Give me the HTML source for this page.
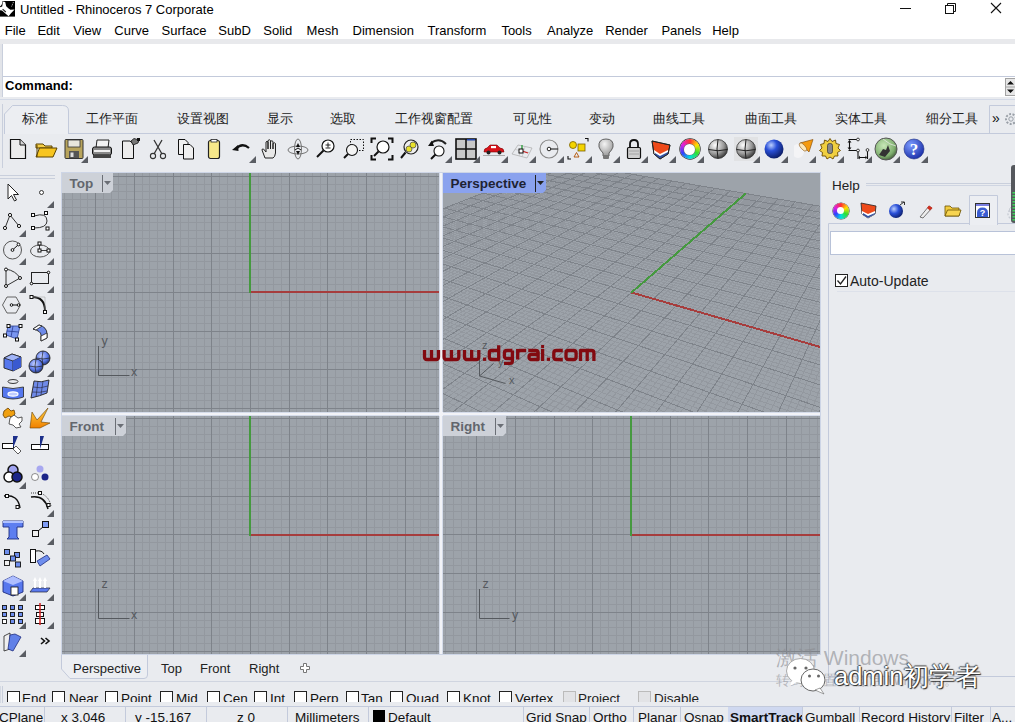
<!DOCTYPE html>
<html><head><meta charset="utf-8"><style>
html,body{margin:0;padding:0;width:1015px;height:722px;overflow:hidden;background:#e9ebef;font-family:"Liberation Sans", sans-serif;}
svg{display:block}
</style></head><body>
<div style="position:absolute;left:0px;top:0px;width:1015px;height:39px;background:#fff"></div><svg style="position:absolute;left:0;top:0" width="16" height="18" viewBox="0 0 16 18"><rect x="0" y="1" width="15" height="15.6" fill="#000"/><path d="M0 0.5 H2.6 Q2.4 5 0 6.6Z" fill="#fff"/><path d="M3 1.6 L5.2 2 L6.2 6.2 L8.6 8.6 L10.4 9.8 L14.6 9.6 L11 13.2 L8.6 16.2 L5.4 13.6 L2 10.6 L0 10.2 L0 7.2 L2.2 6.6Z" fill="#fff"/><path d="M2.6 9.2 L5.8 12" stroke="#222" stroke-width="1.1"/><path d="M13.4 2.2 L11.4 7" stroke="#ddd" stroke-width="0.9" stroke-dasharray="1 0.8"/></svg><div style="position:absolute;left:20px;top:2.00px;font-size:13px;line-height:15px;color:#000;font-weight:normal;white-space:nowrap;">Untitled - Rhinoceros 7 Corporate</div><svg style="position:absolute;left:895px;top:0" width="120" height="19" viewBox="0 0 120 19"><line x1="5" y1="8.5" x2="16" y2="8.5" stroke="#111" stroke-width="1"/><rect x="50.5" y="5.5" width="8" height="8" fill="none" stroke="#111"/><path d="M52.5 5.5 V3.5 H60.5 V11.5 H58.5" fill="none" stroke="#111"/><path d="M96 3 L106 13 M106 3 L96 13" stroke="#111" stroke-width="1.1"/></svg><div style="position:absolute;left:4.7px;top:23.00px;font-size:13px;line-height:15px;color:#000;font-weight:normal;white-space:nowrap;">File</div><div style="position:absolute;left:37.4px;top:23.00px;font-size:13px;line-height:15px;color:#000;font-weight:normal;white-space:nowrap;">Edit</div><div style="position:absolute;left:73.3px;top:23.00px;font-size:13px;line-height:15px;color:#000;font-weight:normal;white-space:nowrap;">View</div><div style="position:absolute;left:114.3px;top:23.00px;font-size:13px;line-height:15px;color:#000;font-weight:normal;white-space:nowrap;">Curve</div><div style="position:absolute;left:161.6px;top:23.00px;font-size:13px;line-height:15px;color:#000;font-weight:normal;white-space:nowrap;">Surface</div><div style="position:absolute;left:218.3px;top:23.00px;font-size:13px;line-height:15px;color:#000;font-weight:normal;white-space:nowrap;">SubD</div><div style="position:absolute;left:263.3px;top:23.00px;font-size:13px;line-height:15px;color:#000;font-weight:normal;white-space:nowrap;">Solid</div><div style="position:absolute;left:306.6px;top:23.00px;font-size:13px;line-height:15px;color:#000;font-weight:normal;white-space:nowrap;">Mesh</div><div style="position:absolute;left:352.6px;top:23.00px;font-size:13px;line-height:15px;color:#000;font-weight:normal;white-space:nowrap;">Dimension</div><div style="position:absolute;left:427.5px;top:23.00px;font-size:13px;line-height:15px;color:#000;font-weight:normal;white-space:nowrap;">Transform</div><div style="position:absolute;left:501.4px;top:23.00px;font-size:13px;line-height:15px;color:#000;font-weight:normal;white-space:nowrap;">Tools</div><div style="position:absolute;left:547px;top:23.00px;font-size:13px;line-height:15px;color:#000;font-weight:normal;white-space:nowrap;">Analyze</div><div style="position:absolute;left:605.2px;top:23.00px;font-size:13px;line-height:15px;color:#000;font-weight:normal;white-space:nowrap;">Render</div><div style="position:absolute;left:661.4px;top:23.00px;font-size:13px;line-height:15px;color:#000;font-weight:normal;white-space:nowrap;">Panels</div><div style="position:absolute;left:712.2px;top:23.00px;font-size:13px;line-height:15px;color:#000;font-weight:normal;white-space:nowrap;">Help</div><div style="position:absolute;left:0px;top:39px;width:1015px;height:5px;background:#e8e9ec"></div><div style="position:absolute;left:0px;top:44px;width:1015px;height:54px;background:#fff"></div><div style="position:absolute;left:0px;top:44px;width:2px;height:54px;background:#e2e4e9"></div><div style="position:absolute;left:2px;top:44px;width:1px;height:54px;background:#c9cfdc"></div><div style="position:absolute;left:3px;top:76px;width:1012px;height:1px;background:#c3cadb"></div><div style="position:absolute;left:5px;top:78.00px;font-size:13px;line-height:15px;color:#000;font-weight:bold;white-space:nowrap;">Command:</div><svg style="position:absolute;left:1005px;top:78px" width="10" height="18" viewBox="0 0 10 18"><rect x="0.5" y="0.5" width="11" height="17" fill="#e6e6e6" stroke="#a3a3a3"/><line x1="0" y1="9" x2="11" y2="9" stroke="#a3a3a3"/><path d="M2 6.5 L5.5 3 L9 6.5Z M2 11.5 L5.5 15 L9 11.5Z" fill="#111"/></svg><div style="position:absolute;left:0px;top:97px;width:1015px;height:76px;background:#e9ebef"></div><div style="position:absolute;left:0px;top:99px;width:1015px;height:1px;background:#d3d9e6"></div><div style="position:absolute;left:2px;top:104px;width:1px;height:64px;background:#c9cfdc"></div><div style="position:absolute;left:68px;top:133px;width:947px;height:1px;background:#c3cadb"></div><svg style="position:absolute;left:3px;top:104px" width="67" height="31" viewBox="0 0 67 31"><path d="M1.5 30 V10 L9.5 1.5 H59.5 Q65.5 1.5 65.5 7 V30" fill="#eceef2" stroke="#c3cadb" stroke-width="1"/></svg><div style="position:absolute;left:22px;top:111.30px;font-size:13px;line-height:15px;color:#222;font-weight:normal;white-space:nowrap;">标准</div><div style="position:absolute;left:86px;top:111.30px;font-size:13px;line-height:15px;color:#222;font-weight:normal;white-space:nowrap;">工作平面</div><div style="position:absolute;left:177px;top:111.30px;font-size:13px;line-height:15px;color:#222;font-weight:normal;white-space:nowrap;">设置视图</div><div style="position:absolute;left:267px;top:111.30px;font-size:13px;line-height:15px;color:#222;font-weight:normal;white-space:nowrap;">显示</div><div style="position:absolute;left:330px;top:111.30px;font-size:13px;line-height:15px;color:#222;font-weight:normal;white-space:nowrap;">选取</div><div style="position:absolute;left:395px;top:111.30px;font-size:13px;line-height:15px;color:#222;font-weight:normal;white-space:nowrap;">工作视窗配置</div><div style="position:absolute;left:513px;top:111.30px;font-size:13px;line-height:15px;color:#222;font-weight:normal;white-space:nowrap;">可见性</div><div style="position:absolute;left:589px;top:111.30px;font-size:13px;line-height:15px;color:#222;font-weight:normal;white-space:nowrap;">变动</div><div style="position:absolute;left:653px;top:111.30px;font-size:13px;line-height:15px;color:#222;font-weight:normal;white-space:nowrap;">曲线工具</div><div style="position:absolute;left:744.6px;top:111.30px;font-size:13px;line-height:15px;color:#222;font-weight:normal;white-space:nowrap;">曲面工具</div><div style="position:absolute;left:835px;top:111.30px;font-size:13px;line-height:15px;color:#222;font-weight:normal;white-space:nowrap;">实体工具</div><div style="position:absolute;left:926px;top:111.30px;font-size:13px;line-height:15px;color:#222;font-weight:normal;white-space:nowrap;">细分工具</div><svg style="position:absolute;left:988px;top:104px" width="27" height="30" viewBox="0 0 27 30"><path d="M1.5 30 V1.5 H27" fill="none" stroke="#c3cadb"/></svg><div style="position:absolute;left:992px;top:110.65px;font-size:14px;line-height:15px;color:#111;font-weight:normal;white-space:nowrap;">»</div><svg style="position:absolute;left:1003px;top:111px" width="14" height="16" viewBox="0 0 14 16"><circle cx="8" cy="8" r="5" fill="none" stroke="#9aa0a8" stroke-width="2" stroke-dasharray="2 1.5"/><circle cx="8" cy="8" r="2.2" fill="none" stroke="#9aa0a8"/></svg><svg style="position:absolute;left:5.5px;top:137px;" width="24" height="24" viewBox="0 0 24 24"><path d="M4.5 2.5 H14 L19.5 8 V21.5 H4.5 Z" fill="#ececec" stroke="#111" stroke-width="1.2"/><path d="M14 2.5 V8 H19.5" fill="#d5d5d5" stroke="#111" stroke-width="1"/></svg><svg style="position:absolute;left:33.5px;top:137px;" width="24" height="24" viewBox="0 0 24 24"><path d="M2 7 H9 L11 9 H18 V11 H2 Z" fill="#f6cf47" stroke="#5a4300" stroke-width="1"/><path d="M2 20 L5.5 11 H23 L19 20 Z" fill="#f7c520" stroke="#5a4300" stroke-width="1"/><path d="M3 20 V8" stroke="#5a4300"/></svg><svg style="position:absolute;left:61.5px;top:137px;" width="24" height="24" viewBox="0 0 24 24"><rect x="3" y="2.5" width="18" height="19" rx="1" fill="#b8a45c" stroke="#333" stroke-width="1"/><rect x="6" y="3" width="12" height="7" fill="#e8e6dc" stroke="#333" stroke-width="0.8"/><rect x="7" y="14" width="10" height="7" fill="#555"/><rect x="8.5" y="15.5" width="3" height="4.5" fill="#ddd"/></svg><svg style="position:absolute;left:80.5px;top:155.5px;" width="7" height="7" viewBox="0 0 7 7"><path d="M7 0 V7 H0 Z" fill="#5a5d63"/></svg><svg style="position:absolute;left:89.5px;top:137px;" width="24" height="24" viewBox="0 0 24 24"><path d="M7 3 H19 L18 11 H6 Z" fill="#f2f2f2" stroke="#222"/><rect x="2.5" y="10" width="19" height="8" rx="2" fill="#888" stroke="#111"/><rect x="4" y="13" width="16" height="2" fill="#eee"/><rect x="3" y="18" width="18" height="3" fill="#444"/></svg><svg style="position:absolute;left:117.5px;top:137px;" width="24" height="24" viewBox="0 0 24 24"><path d="M4.5 4 H12 L15.5 7 V21.5 H4.5 Z" fill="#ececec" stroke="#111"/><path d="M13 4 L16 1.5 L21 3 L20 6 L15 8Z" fill="#777" stroke="#111" stroke-width="0.8"/><rect x="19" y="1" width="3" height="3" fill="#111"/></svg><svg style="position:absolute;left:145.5px;top:137px;" width="24" height="24" viewBox="0 0 24 24"><path d="M8 3 L16 17 M16 3 L8 17" stroke="#333" stroke-width="1.3"/><circle cx="7" cy="19" r="2.6" fill="none" stroke="#333" stroke-width="1.1"/><circle cx="17" cy="19" r="2.6" fill="none" stroke="#333" stroke-width="1.1"/></svg><svg style="position:absolute;left:173.5px;top:137px;" width="24" height="24" viewBox="0 0 24 24"><path d="M4.5 2.5 H11 L14 5.5 V17.5 H4.5 Z" fill="#f0f0f0" stroke="#111"/><path d="M9.5 7.5 H16 L19.5 11 V22 H9.5 Z" fill="#f0f0f0" stroke="#111"/></svg><svg style="position:absolute;left:201.5px;top:137px;" width="24" height="24" viewBox="0 0 24 24"><rect x="6.5" y="3.5" width="11" height="18" rx="2" fill="#f7e88a" stroke="#222" stroke-width="1.2"/><rect x="9" y="2.5" width="6" height="2.5" fill="#fff" stroke="#222" stroke-width="0.8"/></svg><svg style="position:absolute;left:229.5px;top:137px;" width="24" height="24" viewBox="0 0 24 24"><path d="M6 12 Q12 5 19 11" fill="none" stroke="#111" stroke-width="2.2"/><path d="M2 13 L8 8 L8.5 14Z" fill="#111"/></svg><svg style="position:absolute;left:248.5px;top:155.5px;" width="7" height="7" viewBox="0 0 7 7"><path d="M7 0 V7 H0 Z" fill="#5a5d63"/></svg><svg style="position:absolute;left:257.5px;top:137px;" width="24" height="24" viewBox="0 0 24 24"><path d="M7 21 L4 13 Q4 11.5 5.5 12 L8 15 V5 Q9 3.5 10 5 V12 V3.5 Q11.5 2 12.5 3.5 V12 V4.5 Q14 3 15 4.5 V12 V6.5 Q16.5 5 17.5 6.5 V16 Q17 20 15 21 Z" fill="#e8e8e8" stroke="#222" stroke-width="1"/></svg><svg style="position:absolute;left:285.5px;top:137px;" width="24" height="24" viewBox="0 0 24 24"><ellipse cx="12" cy="13" rx="10" ry="4" fill="none" stroke="#666" stroke-width="0.9"/><ellipse cx="12" cy="12" rx="3.5" ry="10" fill="none" stroke="#666" stroke-width="0.9"/><path d="M12 6 L14 10 H10Z M12 18 L10 14 H14Z" fill="#111"/><path d="M9 13 L12 11 L15 13" stroke="#111" fill="none"/></svg><svg style="position:absolute;left:313.5px;top:137px;" width="24" height="24" viewBox="0 0 24 24"><circle cx="14" cy="9" r="6" fill="#fff" stroke="#111" stroke-width="1.2"/><path d="M9.5 13.5 L3 20" stroke="#111" stroke-width="2"/><path d="M11.5 8 H16.5 M14 5.5 V10.5 M11.5 11 H16.5" stroke="#111" stroke-width="0.9"/></svg><svg style="position:absolute;left:341.5px;top:137px;" width="24" height="24" viewBox="0 0 24 24"><rect x="8.5" y="2.5" width="13" height="11" fill="none" stroke="#111" stroke-dasharray="1.5 1.5"/><circle cx="10" cy="13" r="5.5" fill="#f4f4f4" stroke="#111" stroke-width="1.1"/><path d="M6 17 L2 21" stroke="#111" stroke-width="2"/></svg><svg style="position:absolute;left:369.5px;top:137px;" width="24" height="24" viewBox="0 0 24 24"><path d="M1.5 6 V1.5 H6 M18 1.5 H22.5 V6 M22.5 18 V22.5 H18 M6 22.5 H1.5 V18" fill="none" stroke="#111" stroke-width="2"/><circle cx="13" cy="10" r="6" fill="#fff" stroke="#111" stroke-width="1.2"/><path d="M8.5 14.5 L4 19" stroke="#111" stroke-width="2"/></svg><svg style="position:absolute;left:397.5px;top:137px;" width="24" height="24" viewBox="0 0 24 24"><circle cx="13" cy="10" r="7" fill="#eee" stroke="#222" stroke-width="1.2"/><circle cx="11" cy="12" r="3" fill="#e9e22a" stroke="#444" stroke-width="0.7"/><circle cx="15" cy="8" r="3" fill="#e9e22a" stroke="#444" stroke-width="0.7"/><path d="M7.5 15.5 L3 21" stroke="#111" stroke-width="2"/></svg><svg style="position:absolute;left:425.5px;top:137px;" width="24" height="24" viewBox="0 0 24 24"><path d="M5 6 Q13 0 20 7" fill="none" stroke="#222" stroke-width="2"/><path d="M2 9 L6 3.5 L8 9Z" fill="#111"/><circle cx="13" cy="14" r="5" fill="#fff" stroke="#111" stroke-width="1.1"/><path d="M9.5 17.5 L5 22" stroke="#111" stroke-width="2"/></svg><svg style="position:absolute;left:444.5px;top:155.5px;" width="7" height="7" viewBox="0 0 7 7"><path d="M7 0 V7 H0 Z" fill="#5a5d63"/></svg><svg style="position:absolute;left:453.5px;top:137px;" width="24" height="24" viewBox="0 0 24 24"><rect x="2" y="2" width="20" height="20" fill="#c8c8c8" stroke="#111" stroke-width="1.6"/><path d="M12 2 V22 M2 12 H22" stroke="#111" stroke-width="1.6"/><rect x="13" y="2" width="8" height="1.5" fill="#2244aa"/></svg><svg style="position:absolute;left:472.5px;top:155.5px;" width="7" height="7" viewBox="0 0 7 7"><path d="M7 0 V7 H0 Z" fill="#5a5d63"/></svg><svg style="position:absolute;left:481.5px;top:137px;" width="24" height="24" viewBox="0 0 24 24"><path d="M2 15 Q2 11 5 11 L8 8 H15 L18 11 Q22 11 22 15 Z" fill="#d8121a" stroke="#7a0000" stroke-width="0.6"/><rect x="9" y="9" width="5" height="2.2" fill="#fff"/><circle cx="6.5" cy="15.5" r="2" fill="#222"/><circle cx="17.5" cy="15.5" r="2" fill="#222"/><line x1="1" y1="18.5" x2="23" y2="18.5" stroke="#999" stroke-width="0.8"/></svg><svg style="position:absolute;left:500.5px;top:155.5px;" width="7" height="7" viewBox="0 0 7 7"><path d="M7 0 V7 H0 Z" fill="#5a5d63"/></svg><svg style="position:absolute;left:509.5px;top:137px;" width="24" height="24" viewBox="0 0 24 24"><path d="M2 17 L8 8 L22 11 L17 21 Z" fill="none" stroke="#aaa" stroke-width="0.7"/><path d="M5 12.5 L19 15.5 M12 9.5 L9 19 M15 10 L12 20" stroke="#bbb" stroke-width="0.6"/><path d="M12 14 L12 8" stroke="#1a9a2a" stroke-width="1.2"/><path d="M12 14 L18 16" stroke="#cc2222" stroke-width="1.2"/><rect x="9" y="12" width="4" height="4" fill="#fff" stroke="#111"/></svg><svg style="position:absolute;left:528.5px;top:155.5px;" width="7" height="7" viewBox="0 0 7 7"><path d="M7 0 V7 H0 Z" fill="#5a5d63"/></svg><svg style="position:absolute;left:537.5px;top:137px;" width="24" height="24" viewBox="0 0 24 24"><circle cx="11" cy="12" r="9" fill="none" stroke="#888" stroke-width="1.1"/><circle cx="11" cy="12" r="1.8" fill="#fff" stroke="#111" stroke-width="0.9"/><path d="M12.5 12 H20" stroke="#111" stroke-width="1"/></svg><svg style="position:absolute;left:556.5px;top:155.5px;" width="7" height="7" viewBox="0 0 7 7"><path d="M7 0 V7 H0 Z" fill="#5a5d63"/></svg><svg style="position:absolute;left:565.5px;top:137px;" width="24" height="24" viewBox="0 0 24 24"><circle cx="7" cy="8" r="3.5" fill="#f4d400" stroke="#7a6000" stroke-width="0.8"/><rect x="12" y="7" width="7" height="7" fill="#f4d400" stroke="#7a6000" stroke-width="0.8"/><path d="M8 20 L10.5 15.5 L13 20Z" fill="none" stroke="#b05000" stroke-width="0.9"/><path d="M2 19 V22 H5 M19 1.5 H22 V4.5" fill="none" stroke="#111" stroke-width="1.1"/></svg><svg style="position:absolute;left:584.5px;top:155.5px;" width="7" height="7" viewBox="0 0 7 7"><path d="M7 0 V7 H0 Z" fill="#5a5d63"/></svg><svg style="position:absolute;left:593.5px;top:137px;" width="24" height="24" viewBox="0 0 24 24"><defs><radialGradient id="bu" cx="0.4" cy="0.3" r="0.7"><stop offset="0" stop-color="#f4f4f4"/><stop offset="1" stop-color="#9a9a9a"/></radialGradient></defs><path d="M12 2 Q20 2 19 10 Q18 13 15 16 V19 H9 V16 Q6 13 5 10 Q4 2 12 2Z" fill="url(#bu)" stroke="#555" stroke-width="0.9"/><rect x="9" y="18" width="6" height="4" rx="1" fill="#777"/></svg><svg style="position:absolute;left:612.5px;top:155.5px;" width="7" height="7" viewBox="0 0 7 7"><path d="M7 0 V7 H0 Z" fill="#5a5d63"/></svg><svg style="position:absolute;left:621.5px;top:137px;" width="24" height="24" viewBox="0 0 24 24"><path d="M8 11 V7 Q8 3 12 3 Q16 3 16 7 V11" fill="none" stroke="#111" stroke-width="1.8"/><rect x="5.5" y="10.5" width="13" height="11" rx="1.2" fill="#cfcfcf" stroke="#111" stroke-width="1.2"/><path d="M7 14 H17 M7 17 H17" stroke="#999" stroke-width="0.8"/></svg><svg style="position:absolute;left:640.5px;top:155.5px;" width="7" height="7" viewBox="0 0 7 7"><path d="M7 0 V7 H0 Z" fill="#5a5d63"/></svg><svg style="position:absolute;left:649.5px;top:137px;" width="24" height="24" viewBox="0 0 24 24"><path d="M2 4 L20 8 L18 17 L10 22 L4 17Z" fill="#ee4a1a" stroke="#222" stroke-width="0.8"/><path d="M4 13 L10 17 L18 13 L18 17 L10 22 L4 17Z" fill="#fff"/><path d="M5 16 L10 19 L18 15 L18 17 L10 22 L5 18Z" fill="#3050a0"/><path d="M2 4 L20 8 L18 17 L10 22 L4 17Z" fill="none" stroke="#222" stroke-width="1"/></svg><svg style="position:absolute;left:668.5px;top:155.5px;" width="7" height="7" viewBox="0 0 7 7"><path d="M7 0 V7 H0 Z" fill="#5a5d63"/></svg><svg style="position:absolute;left:677.5px;top:137px;" width="24" height="24" viewBox="0 0 24 24"></svg><svg style="position:absolute;left:696.5px;top:155.5px;" width="7" height="7" viewBox="0 0 7 7"><path d="M7 0 V7 H0 Z" fill="#5a5d63"/></svg><svg style="position:absolute;left:705.5px;top:137px;" width="24" height="24" viewBox="0 0 24 24"><defs><radialGradient id="gs" cx="0.35" cy="0.3" r="0.75"><stop offset="0" stop-color="#fff"/><stop offset="0.6" stop-color="#999"/><stop offset="1" stop-color="#333"/></radialGradient></defs><circle cx="12" cy="12" r="9.5" fill="url(#gs)" stroke="#333" stroke-width="0.8"/><path d="M2.5 12.5 Q12 15 21.5 12.5 M12 2.5 Q10 12 12 21.5" fill="none" stroke="#222" stroke-width="1"/></svg><svg style="position:absolute;left:733.5px;top:137px;" width="24" height="24" viewBox="0 0 24 24"><rect x="0" y="0" width="24" height="24" fill="#dcdcdc" opacity="0.6"/><circle cx="12" cy="12" r="9.5" fill="url(#gs)" stroke="#333" stroke-width="0.8"/><path d="M2.5 12.5 Q12 15 21.5 12.5 M12 2.5 Q10 12 12 21.5" fill="none" stroke="#222" stroke-width="1"/></svg><svg style="position:absolute;left:752.5px;top:155.5px;" width="7" height="7" viewBox="0 0 7 7"><path d="M7 0 V7 H0 Z" fill="#5a5d63"/></svg><svg style="position:absolute;left:761.5px;top:137px;" width="24" height="24" viewBox="0 0 24 24"><defs><radialGradient id="bs" cx="0.35" cy="0.3" r="0.75"><stop offset="0" stop-color="#bcd0ff"/><stop offset="0.4" stop-color="#2a50d8"/><stop offset="1" stop-color="#0a1a60"/></radialGradient></defs><circle cx="12" cy="12" r="9.5" fill="url(#bs)"/></svg><svg style="position:absolute;left:780.5px;top:155.5px;" width="7" height="7" viewBox="0 0 7 7"><path d="M7 0 V7 H0 Z" fill="#5a5d63"/></svg><svg style="position:absolute;left:793.5px;top:137px;" width="24" height="24" viewBox="0 0 24 24"><ellipse cx="4" cy="14" rx="6" ry="7" fill="#f4f4f6"/><path d="M6 6 L19 2.5 L15 15 Z" fill="#f59a10" stroke="#7a4200" stroke-width="0.6"/><ellipse cx="9" cy="10" rx="2.2" ry="5" transform="rotate(-40 9 10)" fill="#fde7b8" stroke="#7a4200" stroke-width="0.5"/></svg><svg style="position:absolute;left:808.5px;top:155.5px;" width="7" height="7" viewBox="0 0 7 7"><path d="M7 0 V7 H0 Z" fill="#5a5d63"/></svg><svg style="position:absolute;left:817.5px;top:137px;" width="24" height="24" viewBox="0 0 24 24"><path d="M12 1.5 L14 4.5 L17.5 3 L18 6.5 L21.5 7.5 L20 11 L22.5 13.5 L19.5 15.5 L20 19 L16.5 19 L15 22 L12 20 L9 22 L7.5 19 L4 19 L4.5 15.5 L1.5 13.5 L4 11 L2.5 7.5 L6 6.5 L6.5 3 L10 4.5 Z" fill="#f0cf40" stroke="#6a4a00" stroke-width="0.9"/><rect x="9.5" y="6.5" width="5" height="10" rx="2" fill="#888" stroke="#333" stroke-width="0.7"/></svg><svg style="position:absolute;left:836.5px;top:155.5px;" width="7" height="7" viewBox="0 0 7 7"><path d="M7 0 V7 H0 Z" fill="#5a5d63"/></svg><svg style="position:absolute;left:845.5px;top:137px;" width="24" height="24" viewBox="0 0 24 24"><path d="M2.5 2.5 H11 M2.5 13.5 H11 M12 14 V22 M21.5 14 V22 M3.5 4.5 V11.5 M13.5 20.5 H20" fill="none" stroke="#111" stroke-width="1.1"/><path d="M1.5 5.5 L3.5 3 L5.5 5.5Z M1.5 10.5 L3.5 13 L5.5 10.5Z M14 18.5 L12.5 20.5 L14 22.5Z M19.5 18.5 L21 20.5 L19.5 22.5Z" fill="#111"/><circle cx="12" cy="2.5" r="1.4" fill="#fff" stroke="#111" stroke-width="0.8"/><circle cx="12" cy="13.5" r="1.4" fill="#fff" stroke="#111" stroke-width="0.8"/><circle cx="21.5" cy="13" r="1.4" fill="#fff" stroke="#111" stroke-width="0.8"/></svg><svg style="position:absolute;left:864.5px;top:155.5px;" width="7" height="7" viewBox="0 0 7 7"><path d="M7 0 V7 H0 Z" fill="#5a5d63"/></svg><svg style="position:absolute;left:873.5px;top:137px;" width="24" height="24" viewBox="0 0 24 24"><defs><radialGradient id="grs" cx="0.4" cy="0.35" r="0.7"><stop offset="0" stop-color="#c8e8b8"/><stop offset="0.7" stop-color="#80b070"/><stop offset="1" stop-color="#405a38"/></radialGradient></defs><circle cx="12" cy="12" r="11" fill="url(#grs)" stroke="#555" stroke-width="1"/><path d="M5 18 L9 12 L12 13 L14 8 L16 14 L11 20 Z" fill="#333"/><path d="M9 2 Q16 8 22 9" stroke="#eee" fill="none" stroke-width="0.7"/></svg><svg style="position:absolute;left:892.5px;top:155.5px;" width="7" height="7" viewBox="0 0 7 7"><path d="M7 0 V7 H0 Z" fill="#5a5d63"/></svg><svg style="position:absolute;left:901.5px;top:137px;" width="24" height="24" viewBox="0 0 24 24"><defs><radialGradient id="hs" cx="0.35" cy="0.3" r="0.75"><stop offset="0" stop-color="#7c9cff"/><stop offset="1" stop-color="#1a2ea8"/></radialGradient></defs><circle cx="12" cy="12" r="10" fill="url(#hs)" stroke="#1a2a80" stroke-width="0.6"/><text x="12" y="18" font-family="Liberation Serif" font-weight="bold" font-size="17" fill="#fff" text-anchor="middle">?</text></svg><svg style="position:absolute;left:920.5px;top:155.5px;" width="7" height="7" viewBox="0 0 7 7"><path d="M7 0 V7 H0 Z" fill="#5a5d63"/></svg><div style="position:absolute;left:679.5px;top:139px;width:20px;height:20px;border-radius:50%;background:conic-gradient(from 0deg,#ff3030,#ffe000,#30e030,#00e0e0,#3040ff,#e020e0,#ff3030);box-shadow:0 0 0 0.7px #333"></div><div style="position:absolute;left:684.0px;top:143.5px;width:11px;height:11px;border-radius:50%;background:#fff;box-shadow:0 0 0 0.5px #666"></div><div style="position:absolute;left:0px;top:175px;width:55px;height:1px;background:#c9cfdc"></div><div style="position:absolute;left:0px;top:178px;width:55px;height:1px;background:#c9cfdc"></div><svg style="position:absolute;left:1px;top:181px;" width="24" height="24" viewBox="0 0 24 24"><path d="M7 3 V18 L10.5 14.5 L13.5 20 L15.5 19 L12.5 13.5 L17.5 13.5 Z" fill="#fff" stroke="#222" stroke-width="1"/></svg><svg style="position:absolute;left:28px;top:181px;" width="24" height="24" viewBox="0 0 24 24"><circle cx="13.5" cy="11.5" r="2" fill="#fff" stroke="#222" stroke-width="0.9"/></svg><svg style="position:absolute;left:47.0px;top:201.0px;" width="7" height="7" viewBox="0 0 7 7"><path d="M7 0 V7 H0 Z" fill="#5a5d63"/></svg><svg style="position:absolute;left:1px;top:210px;" width="24" height="24" viewBox="0 0 24 24"><path d="M4 18 L9 5 L18 16" fill="none" stroke="#333" stroke-width="1"/><circle cx="4" cy="18" r="1.6" fill="#fff" stroke="#111"/><circle cx="9" cy="5" r="1.6" fill="#fff" stroke="#111"/><circle cx="18" cy="16" r="1.6" fill="#fff" stroke="#111"/></svg><svg style="position:absolute;left:19.0px;top:230.0px;" width="7" height="7" viewBox="0 0 7 7"><path d="M7 0 V7 H0 Z" fill="#5a5d63"/></svg><svg style="position:absolute;left:28px;top:210px;" width="24" height="24" viewBox="0 0 24 24"><path d="M6 6 Q19 2 19 11 Q19 18 6 18" fill="none" stroke="#333" stroke-width="1"/><rect x="3.5" y="3.5" width="3" height="3" fill="#fff" stroke="#111"/><rect x="16.5" y="1.5" width="3" height="3" fill="#fff" stroke="#111"/><rect x="3.5" y="16.5" width="3" height="3" fill="#fff" stroke="#111"/><rect x="18" y="17" width="3" height="3" fill="#fff" stroke="#111"/></svg><svg style="position:absolute;left:47.0px;top:230.0px;" width="7" height="7" viewBox="0 0 7 7"><path d="M7 0 V7 H0 Z" fill="#5a5d63"/></svg><svg style="position:absolute;left:1px;top:238px;" width="24" height="24" viewBox="0 0 24 24"><circle cx="11.5" cy="12" r="9" fill="none" stroke="#555" stroke-width="1"/><path d="M11.5 12 L17 7" stroke="#111"/><circle cx="11.5" cy="12" r="1.4" fill="#fff" stroke="#111"/><circle cx="17.5" cy="6.5" r="1.4" fill="#fff" stroke="#111"/></svg><svg style="position:absolute;left:19.0px;top:258.0px;" width="7" height="7" viewBox="0 0 7 7"><path d="M7 0 V7 H0 Z" fill="#5a5d63"/></svg><svg style="position:absolute;left:28px;top:238px;" width="24" height="24" viewBox="0 0 24 24"><ellipse cx="12" cy="13" rx="9.5" ry="6" fill="none" stroke="#555" stroke-width="1"/><rect x="10" y="4" width="3" height="3" fill="#fff" stroke="#111"/><rect x="10" y="11" width="3" height="3" fill="#fff" stroke="#111"/><rect x="19" y="11" width="3" height="3" fill="#fff" stroke="#111"/><path d="M11.5 7 V11 M13 12.5 H19" stroke="#111" stroke-width="0.8"/></svg><svg style="position:absolute;left:47.0px;top:258.0px;" width="7" height="7" viewBox="0 0 7 7"><path d="M7 0 V7 H0 Z" fill="#5a5d63"/></svg><svg style="position:absolute;left:1px;top:266px;" width="24" height="24" viewBox="0 0 24 24"><path d="M5 3 V20 L19 12 Q15 5 5 3" fill="none" stroke="#333" stroke-width="1"/><circle cx="5" cy="3.5" r="1.5" fill="#fff" stroke="#111"/><circle cx="19" cy="12" r="1.5" fill="#fff" stroke="#111"/><circle cx="5" cy="20" r="1.5" fill="#fff" stroke="#111"/></svg><svg style="position:absolute;left:19.0px;top:286.0px;" width="7" height="7" viewBox="0 0 7 7"><path d="M7 0 V7 H0 Z" fill="#5a5d63"/></svg><svg style="position:absolute;left:28px;top:266px;" width="24" height="24" viewBox="0 0 24 24"><rect x="3.5" y="6.5" width="17" height="11" fill="none" stroke="#222" stroke-width="1"/><circle cx="3.5" cy="17.5" r="1.3" fill="#fff" stroke="#111"/><circle cx="20.5" cy="6.5" r="1.3" fill="#fff" stroke="#111"/></svg><svg style="position:absolute;left:47.0px;top:286.0px;" width="7" height="7" viewBox="0 0 7 7"><path d="M7 0 V7 H0 Z" fill="#5a5d63"/></svg><svg style="position:absolute;left:1px;top:293px;" width="24" height="24" viewBox="0 0 24 24"><path d="M6 4 H15 L19.5 12 L15 20 H6 L1.5 12Z" fill="none" stroke="#555" stroke-width="0.9"/><path d="M10.5 12 H17" stroke="#111"/><circle cx="10.5" cy="12" r="1.3" fill="#fff" stroke="#111"/><circle cx="17.5" cy="12" r="1.3" fill="#fff" stroke="#111"/></svg><svg style="position:absolute;left:19.0px;top:313.0px;" width="7" height="7" viewBox="0 0 7 7"><path d="M7 0 V7 H0 Z" fill="#5a5d63"/></svg><svg style="position:absolute;left:28px;top:293px;" width="24" height="24" viewBox="0 0 24 24"><path d="M4 4 Q17 4 17 18" fill="none" stroke="#111" stroke-width="2"/><rect x="2" y="2.5" width="3" height="3" fill="#fff" stroke="#111"/><rect x="15.5" y="17.5" width="3" height="3" fill="#fff" stroke="#111"/><path d="M5 4 H17 V17" fill="none" stroke="#aaa" stroke-width="0.6"/></svg><svg style="position:absolute;left:47.0px;top:313.0px;" width="7" height="7" viewBox="0 0 7 7"><path d="M7 0 V7 H0 Z" fill="#5a5d63"/></svg><svg style="position:absolute;left:1px;top:321px;" width="24" height="24" viewBox="0 0 24 24"><path d="M7 5 L19 5 L16 18 L5 14 Z" fill="#7a96f0" stroke="#2a3c90" stroke-width="0.8"/><path d="M6 10 L17.5 11 M12 5 L10 16" stroke="#2a3c90" stroke-width="0.8"/><rect x="6" y="3.5" width="3" height="3" fill="#fff" stroke="#111"/><rect x="18" y="3.5" width="3" height="3" fill="#fff" stroke="#111"/><rect x="2.5" y="13" width="3" height="3" fill="#fff" stroke="#111"/><rect x="14.5" y="17" width="3" height="3" fill="#fff" stroke="#111"/></svg><svg style="position:absolute;left:19.0px;top:341.0px;" width="7" height="7" viewBox="0 0 7 7"><path d="M7 0 V7 H0 Z" fill="#5a5d63"/></svg><svg style="position:absolute;left:28px;top:321px;" width="24" height="24" viewBox="0 0 24 24"><path d="M5 8 L11 4 Q19 6 19 13 V17 L13 20 V14 Q13 10 5 8Z" fill="#6e8ae8" stroke="#222" stroke-width="0.9"/><path d="M5 8 L11 4 L14 5 L8 9Z" fill="#fff" stroke="#222" stroke-width="0.8"/><path d="M13 15 L19 12 V17 L13 20Z" fill="#fff" stroke="#222" stroke-width="0.8"/></svg><svg style="position:absolute;left:47.0px;top:341.0px;" width="7" height="7" viewBox="0 0 7 7"><path d="M7 0 V7 H0 Z" fill="#5a5d63"/></svg><svg style="position:absolute;left:1px;top:350px;" width="24" height="24" viewBox="0 0 24 24"><path d="M3 8 L11 4 L20 7 L20 17 L12 21 L3 18Z" fill="#5577ee" stroke="#222" stroke-width="0.9"/><path d="M3 8 L12 11 L20 7 L11 4Z" fill="#a0b4f8" stroke="#222" stroke-width="0.8"/><path d="M12 11 V21" stroke="#222" stroke-width="0.8"/><path d="M12 11 L20 7 V17 L12 21Z" fill="#3a5ad0"/></svg><svg style="position:absolute;left:19.0px;top:370.0px;" width="7" height="7" viewBox="0 0 7 7"><path d="M7 0 V7 H0 Z" fill="#5a5d63"/></svg><svg style="position:absolute;left:28px;top:350px;" width="24" height="24" viewBox="0 0 24 24"><defs><radialGradient id="ls" cx="0.4" cy="0.35" r="0.7"><stop offset="0" stop-color="#c6d2ff"/><stop offset="0.6" stop-color="#5a78e8"/><stop offset="1" stop-color="#20306a"/></radialGradient></defs><circle cx="15" cy="8" r="7" fill="url(#ls)" stroke="#222" stroke-width="0.9"/><circle cx="8" cy="16" r="7" fill="url(#ls)" stroke="#222" stroke-width="0.9"/><path d="M1 16 Q8 18 15 16 M8 9 Q6 16 8 23 M8 8 Q15 10 22 8 M15 1 Q13 8 15 15" fill="none" stroke="#222" stroke-width="0.7"/></svg><svg style="position:absolute;left:47.0px;top:370.0px;" width="7" height="7" viewBox="0 0 7 7"><path d="M7 0 V7 H0 Z" fill="#5a5d63"/></svg><svg style="position:absolute;left:1px;top:378px;" width="24" height="24" viewBox="0 0 24 24"><ellipse cx="12" cy="3.5" rx="5" ry="2" fill="none" stroke="#222" stroke-width="0.9"/><path d="M1.5 9 Q12 12 22.5 9 V19 Q12 23 1.5 19Z" fill="#5577ee" stroke="#222" stroke-width="0.8"/><ellipse cx="12" cy="16" rx="5" ry="2.2" fill="#c0ccff" stroke="#fff" stroke-width="1.2"/></svg><svg style="position:absolute;left:19.0px;top:398.0px;" width="7" height="7" viewBox="0 0 7 7"><path d="M7 0 V7 H0 Z" fill="#5a5d63"/></svg><svg style="position:absolute;left:28px;top:378px;" width="24" height="24" viewBox="0 0 24 24"><path d="M6 3 Q13 5 21 2 L19 15 Q12 18 3 20Z" fill="#6f8ae8" stroke="#222" stroke-width="0.9"/><path d="M5 9 Q12 11 20 8 M4 14 Q12 15 19 13 M10 3 L8 19 M15 3 L13 17" stroke="#223" stroke-width="0.6" fill="none"/></svg><svg style="position:absolute;left:47.0px;top:398.0px;" width="7" height="7" viewBox="0 0 7 7"><path d="M7 0 V7 H0 Z" fill="#5a5d63"/></svg><svg style="position:absolute;left:1px;top:406px;" width="24" height="24" viewBox="0 0 24 24"><path d="M3 5 L7 2 L10 5 L13 4 L14 8 L11 11 L8 10 L4 12 L2 9Z" fill="#f0a010" stroke="#6a4000" stroke-width="0.8"/><path d="M9 12 L13 9 L17 12 L21 11 L21 15 L18 18 L20 21 L15 22 L12 19 L8 18Z" fill="#fff" stroke="#333" stroke-width="0.8"/></svg><svg style="position:absolute;left:28px;top:406px;" width="24" height="24" viewBox="0 0 24 24"><defs><linearGradient id="bo" x1="0" y1="0" x2="0" y2="1"><stop offset="0" stop-color="#ffd040"/><stop offset="1" stop-color="#f08000"/></linearGradient></defs><path d="M2 22 L4 6 L9 14 L20 2 L13 16 L22 17 L12 22Z" fill="url(#bo)" stroke="#6a4000" stroke-width="0.6"/></svg><svg style="position:absolute;left:1px;top:434px;" width="24" height="24" viewBox="0 0 24 24"><rect x="1.5" y="9.5" width="11" height="5" fill="#fff" stroke="#111"/><path d="M12 2 H17 L12 14Z" fill="#1c2f8a"/><path d="M12 15 L15 12 L20 17 L17 20Z" fill="#fff" stroke="#333" stroke-width="0.8"/></svg><svg style="position:absolute;left:28px;top:434px;" width="24" height="24" viewBox="0 0 24 24"><rect x="3.5" y="10.5" width="17" height="5" fill="#fff" stroke="#111"/><path d="M12 2 H16 L12 15Z" fill="#1c2f8a"/></svg><svg style="position:absolute;left:1px;top:462px;" width="24" height="24" viewBox="0 0 24 24"><circle cx="12" cy="8" r="5" fill="#9fa3f0" stroke="#111" stroke-width="1.5"/><circle cx="8" cy="15" r="5" fill="#fff" stroke="#111" stroke-width="1.5"/><circle cx="16" cy="15" r="5" fill="#1c2588" stroke="#111" stroke-width="1.5"/></svg><svg style="position:absolute;left:19.0px;top:482.0px;" width="7" height="7" viewBox="0 0 7 7"><path d="M7 0 V7 H0 Z" fill="#5a5d63"/></svg><svg style="position:absolute;left:28px;top:462px;" width="24" height="24" viewBox="0 0 24 24"><circle cx="12" cy="7" r="3.5" fill="#a8a8f0"/><circle cx="7" cy="15" r="3.5" fill="#fff" stroke="#444" stroke-width="0.6"/><circle cx="17" cy="15" r="3.5" fill="#1c2588"/></svg><svg style="position:absolute;left:1px;top:490px;" width="24" height="24" viewBox="0 0 24 24"><path d="M3 6 Q17 4 19 18" fill="none" stroke="#111" stroke-width="1.4"/><rect x="4.5" y="4.5" width="3" height="3" fill="#fff" stroke="#111"/><rect x="15" y="15.5" width="3" height="3" fill="#fff" stroke="#111"/></svg><svg style="position:absolute;left:28px;top:490px;" width="24" height="24" viewBox="0 0 24 24"><path d="M3 7 Q17 5 20 19" fill="none" stroke="#111" stroke-width="1.5"/><path d="M3 3 H12 Q21 6 23 16" fill="none" stroke="#111" stroke-width="0.8" stroke-dasharray="1 1"/><rect x="10.5" y="1.5" width="3" height="3" fill="#fff" stroke="#111"/><rect x="19" y="13.5" width="3" height="3" fill="#fff" stroke="#111"/></svg><svg style="position:absolute;left:47.0px;top:510.0px;" width="7" height="7" viewBox="0 0 7 7"><path d="M7 0 V7 H0 Z" fill="#5a5d63"/></svg><svg style="position:absolute;left:1px;top:518px;" width="24" height="24" viewBox="0 0 24 24"><path d="M2 3 H22 V9 H16 V19 L18 21 H6 L8 19 V9 H2Z" fill="#5d7ef0" stroke="#1e2c80" stroke-width="0.9"/><path d="M2 3 H22 V5 H2Z" fill="#b0c2ff"/></svg><svg style="position:absolute;left:28px;top:518px;" width="24" height="24" viewBox="0 0 24 24"><rect x="4.5" y="12.5" width="6" height="6" fill="#f0f0f0" stroke="#111"/><rect x="14.5" y="3.5" width="6" height="6" fill="#7f9cf4" stroke="#111"/><path d="M10 13 L15 9" stroke="#111"/></svg><svg style="position:absolute;left:47.0px;top:538.0px;" width="7" height="7" viewBox="0 0 7 7"><path d="M7 0 V7 H0 Z" fill="#5a5d63"/></svg><svg style="position:absolute;left:1px;top:546px;" width="24" height="24" viewBox="0 0 24 24"><rect x="3.5" y="3.5" width="5" height="5" fill="#6e8eee" stroke="#111" stroke-width="0.9"/><rect x="13.5" y="6.5" width="5" height="5" fill="#6e8eee" stroke="#111" stroke-width="0.9"/><rect x="9.5" y="10" width="5" height="5" fill="#6e8eee" stroke="#111" stroke-width="0.9"/><rect x="3.5" y="14.5" width="5" height="5" fill="#f0f0f0" stroke="#111" stroke-width="0.9"/><rect x="14.5" y="16" width="5" height="5" fill="#6e8eee" stroke="#111" stroke-width="0.9"/></svg><svg style="position:absolute;left:28px;top:546px;" width="24" height="24" viewBox="0 0 24 24"><rect x="2.5" y="3.5" width="5" height="13" fill="#fff" stroke="#111"/><path d="M9 15 L19 9 L22 13 L12 20Z" fill="#6e8eee" stroke="#1e2c80" stroke-width="0.8"/><path d="M8 5 Q14 4 16 8" fill="none" stroke="#111"/></svg><svg style="position:absolute;left:1px;top:574px;" width="24" height="24" viewBox="0 0 24 24"><path d="M2 7 L12 2 L22 7 V18 L12 22 L2 18Z" fill="#5878ee" stroke="#1e2c80" stroke-width="0.9"/><path d="M2 7 L12 11 L22 7 L12 2Z" fill="#aebeff"/><rect x="10" y="13" width="7" height="8" fill="#fff" stroke="#111" stroke-width="0.8"/></svg><svg style="position:absolute;left:19.0px;top:594.0px;" width="7" height="7" viewBox="0 0 7 7"><path d="M7 0 V7 H0 Z" fill="#5a5d63"/></svg><svg style="position:absolute;left:28px;top:574px;" width="24" height="24" viewBox="0 0 24 24"><path d="M2 18 L5 14 H22 L19 18Z" fill="#5a7aee" stroke="#223" stroke-width="0.7"/><path d="M7 14 V5 M12 14 V5 M17 14 V5" stroke="#fff" stroke-width="2"/><path d="M5 7 L7 3 L9 7Z M10 7 L12 3 L14 7Z M15 7 L17 3 L19 7Z" fill="#fff"/></svg><svg style="position:absolute;left:47.0px;top:594.0px;" width="7" height="7" viewBox="0 0 7 7"><path d="M7 0 V7 H0 Z" fill="#5a5d63"/></svg><svg style="position:absolute;left:1px;top:602px;" width="24" height="24" viewBox="0 0 24 24"><g fill="#6e8eee" stroke="#111" stroke-width="0.9"><rect x="1.5" y="3.5" width="4" height="4"/><rect x="9.5" y="3.5" width="4" height="4"/><rect x="17.5" y="3.5" width="4" height="4"/><rect x="1.5" y="10.5" width="4" height="4"/><rect x="9.5" y="10.5" width="4" height="4"/><rect x="17.5" y="10.5" width="4" height="4"/><rect x="1.5" y="17.5" width="4" height="4" fill="#fff"/><rect x="9.5" y="17.5" width="4" height="4"/><rect x="17.5" y="17.5" width="4" height="4"/></g></svg><svg style="position:absolute;left:19.0px;top:622.0px;" width="7" height="7" viewBox="0 0 7 7"><path d="M7 0 V7 H0 Z" fill="#5a5d63"/></svg><svg style="position:absolute;left:28px;top:602px;" width="24" height="24" viewBox="0 0 24 24"><rect x="7.5" y="3.5" width="9" height="4" fill="#fff" stroke="#111"/><rect x="8.5" y="10.5" width="7" height="4" fill="#fff" stroke="#111"/><rect x="7.5" y="16.5" width="9" height="5" fill="#fff" stroke="#111"/><path d="M12 1 V23" stroke="#d02020" stroke-width="1.5"/></svg><svg style="position:absolute;left:47.0px;top:622.0px;" width="7" height="7" viewBox="0 0 7 7"><path d="M7 0 V7 H0 Z" fill="#5a5d63"/></svg><svg style="position:absolute;left:1px;top:630px;" width="24" height="24" viewBox="0 0 24 24"><path d="M3 6 L9 3 V19 L3 21Z" fill="#eee" stroke="#222" stroke-width="0.8"/><path d="M9 5 L14 4 L20 7 L12 21 L7 19Z" fill="#6080e8" stroke="#1e2c80" stroke-width="0.8"/></svg><svg style="position:absolute;left:19.0px;top:650.0px;" width="7" height="7" viewBox="0 0 7 7"><path d="M7 0 V7 H0 Z" fill="#5a5d63"/></svg><svg style="position:absolute;left:28px;top:630px;" width="24" height="24" viewBox="0 0 24 24"><path d="M13 8 L16.5 11 L13 14 M17.5 8 L21 11 L17.5 14" fill="none" stroke="#111" stroke-width="1.6"/></svg><div style="position:absolute;left:58px;top:170px;width:768px;height:488px;background:#e9ebef"></div><div style="position:absolute;left:61px;top:172px;width:760px;height:483px;background:#f2f3f7;border:1px solid #cdd5e6;box-sizing:border-box"></div><div style="position:absolute;left:439px;top:173px;width:1px;height:481px;background:#d5dcea"></div><div style="position:absolute;left:442px;top:173px;width:1px;height:481px;background:#d5dcea"></div><div style="position:absolute;left:62px;top:412px;width:758px;height:1px;background:#d5dcea"></div><div style="position:absolute;left:62px;top:415px;width:758px;height:1px;background:#d5dcea"></div><div style="position:absolute;left:439px;top:412px;width:4px;height:4px;background:#f2f3f7"></div><svg style="position:absolute;left:62px;top:173px;" width="377" height="239" viewBox="0 0 377 239"><rect width="377" height="239" fill="#9da3aa"/><g fill="#93989f"><rect x="2" y="0" width="1" height="239"/><rect x="10" y="0" width="1" height="239"/><rect x="18" y="0" width="1" height="239"/><rect x="25" y="0" width="1" height="239"/><rect x="41" y="0" width="1" height="239"/><rect x="49" y="0" width="1" height="239"/><rect x="56" y="0" width="1" height="239"/><rect x="64" y="0" width="1" height="239"/><rect x="80" y="0" width="1" height="239"/><rect x="87" y="0" width="1" height="239"/><rect x="95" y="0" width="1" height="239"/><rect x="103" y="0" width="1" height="239"/><rect x="118" y="0" width="1" height="239"/><rect x="126" y="0" width="1" height="239"/><rect x="134" y="0" width="1" height="239"/><rect x="142" y="0" width="1" height="239"/><rect x="157" y="0" width="1" height="239"/><rect x="165" y="0" width="1" height="239"/><rect x="173" y="0" width="1" height="239"/><rect x="180" y="0" width="1" height="239"/><rect x="196" y="0" width="1" height="239"/><rect x="203" y="0" width="1" height="239"/><rect x="211" y="0" width="1" height="239"/><rect x="219" y="0" width="1" height="239"/><rect x="234" y="0" width="1" height="239"/><rect x="242" y="0" width="1" height="239"/><rect x="250" y="0" width="1" height="239"/><rect x="258" y="0" width="1" height="239"/><rect x="273" y="0" width="1" height="239"/><rect x="281" y="0" width="1" height="239"/><rect x="289" y="0" width="1" height="239"/><rect x="296" y="0" width="1" height="239"/><rect x="312" y="0" width="1" height="239"/><rect x="320" y="0" width="1" height="239"/><rect x="327" y="0" width="1" height="239"/><rect x="335" y="0" width="1" height="239"/><rect x="351" y="0" width="1" height="239"/><rect x="358" y="0" width="1" height="239"/><rect x="366" y="0" width="1" height="239"/><rect x="374" y="0" width="1" height="239"/><rect x="0" y="11" width="377" height="1"/><rect x="0" y="18" width="377" height="1"/><rect x="0" y="26" width="377" height="1"/><rect x="0" y="34" width="377" height="1"/><rect x="0" y="49" width="377" height="1"/><rect x="0" y="57" width="377" height="1"/><rect x="0" y="65" width="377" height="1"/><rect x="0" y="73" width="377" height="1"/><rect x="0" y="88" width="377" height="1"/><rect x="0" y="96" width="377" height="1"/><rect x="0" y="104" width="377" height="1"/><rect x="0" y="111" width="377" height="1"/><rect x="0" y="127" width="377" height="1"/><rect x="0" y="134" width="377" height="1"/><rect x="0" y="142" width="377" height="1"/><rect x="0" y="150" width="377" height="1"/><rect x="0" y="165" width="377" height="1"/><rect x="0" y="173" width="377" height="1"/><rect x="0" y="181" width="377" height="1"/><rect x="0" y="189" width="377" height="1"/><rect x="0" y="204" width="377" height="1"/><rect x="0" y="212" width="377" height="1"/><rect x="0" y="220" width="377" height="1"/><rect x="0" y="227" width="377" height="1"/></g><g fill="#7e838a"><rect x="33" y="0" width="1" height="239"/><rect x="72" y="0" width="1" height="239"/><rect x="111" y="0" width="1" height="239"/><rect x="149" y="0" width="1" height="239"/><rect x="188" y="0" width="1" height="239"/><rect x="227" y="0" width="1" height="239"/><rect x="265" y="0" width="1" height="239"/><rect x="304" y="0" width="1" height="239"/><rect x="343" y="0" width="1" height="239"/><rect x="0" y="3" width="377" height="1"/><rect x="0" y="42" width="377" height="1"/><rect x="0" y="80" width="377" height="1"/><rect x="0" y="119" width="377" height="1"/><rect x="0" y="158" width="377" height="1"/><rect x="0" y="196" width="377" height="1"/><rect x="0" y="235" width="377" height="1"/></g><rect x="187" y="0" width="2" height="120" fill="#45993f"/><rect x="189" y="118" width="189" height="2" fill="#a63d3d"/></svg><svg style="position:absolute;left:62px;top:416px;" width="377" height="238" viewBox="0 0 377 238"><rect width="377" height="238" fill="#9da3aa"/><g fill="#93989f"><rect x="2" y="0" width="1" height="238"/><rect x="10" y="0" width="1" height="238"/><rect x="18" y="0" width="1" height="238"/><rect x="25" y="0" width="1" height="238"/><rect x="41" y="0" width="1" height="238"/><rect x="49" y="0" width="1" height="238"/><rect x="56" y="0" width="1" height="238"/><rect x="64" y="0" width="1" height="238"/><rect x="80" y="0" width="1" height="238"/><rect x="87" y="0" width="1" height="238"/><rect x="95" y="0" width="1" height="238"/><rect x="103" y="0" width="1" height="238"/><rect x="118" y="0" width="1" height="238"/><rect x="126" y="0" width="1" height="238"/><rect x="134" y="0" width="1" height="238"/><rect x="142" y="0" width="1" height="238"/><rect x="157" y="0" width="1" height="238"/><rect x="165" y="0" width="1" height="238"/><rect x="173" y="0" width="1" height="238"/><rect x="180" y="0" width="1" height="238"/><rect x="196" y="0" width="1" height="238"/><rect x="203" y="0" width="1" height="238"/><rect x="211" y="0" width="1" height="238"/><rect x="219" y="0" width="1" height="238"/><rect x="234" y="0" width="1" height="238"/><rect x="242" y="0" width="1" height="238"/><rect x="250" y="0" width="1" height="238"/><rect x="258" y="0" width="1" height="238"/><rect x="273" y="0" width="1" height="238"/><rect x="281" y="0" width="1" height="238"/><rect x="289" y="0" width="1" height="238"/><rect x="296" y="0" width="1" height="238"/><rect x="312" y="0" width="1" height="238"/><rect x="320" y="0" width="1" height="238"/><rect x="327" y="0" width="1" height="238"/><rect x="335" y="0" width="1" height="238"/><rect x="351" y="0" width="1" height="238"/><rect x="358" y="0" width="1" height="238"/><rect x="366" y="0" width="1" height="238"/><rect x="374" y="0" width="1" height="238"/><rect x="0" y="10" width="377" height="1"/><rect x="0" y="18" width="377" height="1"/><rect x="0" y="26" width="377" height="1"/><rect x="0" y="33" width="377" height="1"/><rect x="0" y="49" width="377" height="1"/><rect x="0" y="57" width="377" height="1"/><rect x="0" y="64" width="377" height="1"/><rect x="0" y="72" width="377" height="1"/><rect x="0" y="88" width="377" height="1"/><rect x="0" y="95" width="377" height="1"/><rect x="0" y="103" width="377" height="1"/><rect x="0" y="111" width="377" height="1"/><rect x="0" y="126" width="377" height="1"/><rect x="0" y="134" width="377" height="1"/><rect x="0" y="142" width="377" height="1"/><rect x="0" y="149" width="377" height="1"/><rect x="0" y="165" width="377" height="1"/><rect x="0" y="173" width="377" height="1"/><rect x="0" y="180" width="377" height="1"/><rect x="0" y="188" width="377" height="1"/><rect x="0" y="204" width="377" height="1"/><rect x="0" y="211" width="377" height="1"/><rect x="0" y="219" width="377" height="1"/><rect x="0" y="227" width="377" height="1"/></g><g fill="#7e838a"><rect x="33" y="0" width="1" height="238"/><rect x="72" y="0" width="1" height="238"/><rect x="111" y="0" width="1" height="238"/><rect x="149" y="0" width="1" height="238"/><rect x="188" y="0" width="1" height="238"/><rect x="227" y="0" width="1" height="238"/><rect x="265" y="0" width="1" height="238"/><rect x="304" y="0" width="1" height="238"/><rect x="343" y="0" width="1" height="238"/><rect x="0" y="2" width="377" height="1"/><rect x="0" y="41" width="377" height="1"/><rect x="0" y="80" width="377" height="1"/><rect x="0" y="118" width="377" height="1"/><rect x="0" y="157" width="377" height="1"/><rect x="0" y="196" width="377" height="1"/><rect x="0" y="235" width="377" height="1"/></g><rect x="187" y="0" width="2" height="120" fill="#45993f"/><rect x="189" y="118" width="189" height="2" fill="#a63d3d"/></svg><svg style="position:absolute;left:443px;top:416px;" width="377" height="238" viewBox="0 0 377 238"><rect width="377" height="238" fill="#9da3aa"/><g fill="#93989f"><rect x="2" y="0" width="1" height="238"/><rect x="10" y="0" width="1" height="238"/><rect x="18" y="0" width="1" height="238"/><rect x="25" y="0" width="1" height="238"/><rect x="41" y="0" width="1" height="238"/><rect x="49" y="0" width="1" height="238"/><rect x="56" y="0" width="1" height="238"/><rect x="64" y="0" width="1" height="238"/><rect x="80" y="0" width="1" height="238"/><rect x="87" y="0" width="1" height="238"/><rect x="95" y="0" width="1" height="238"/><rect x="103" y="0" width="1" height="238"/><rect x="118" y="0" width="1" height="238"/><rect x="126" y="0" width="1" height="238"/><rect x="134" y="0" width="1" height="238"/><rect x="142" y="0" width="1" height="238"/><rect x="157" y="0" width="1" height="238"/><rect x="165" y="0" width="1" height="238"/><rect x="173" y="0" width="1" height="238"/><rect x="180" y="0" width="1" height="238"/><rect x="196" y="0" width="1" height="238"/><rect x="203" y="0" width="1" height="238"/><rect x="211" y="0" width="1" height="238"/><rect x="219" y="0" width="1" height="238"/><rect x="234" y="0" width="1" height="238"/><rect x="242" y="0" width="1" height="238"/><rect x="250" y="0" width="1" height="238"/><rect x="258" y="0" width="1" height="238"/><rect x="273" y="0" width="1" height="238"/><rect x="281" y="0" width="1" height="238"/><rect x="289" y="0" width="1" height="238"/><rect x="296" y="0" width="1" height="238"/><rect x="312" y="0" width="1" height="238"/><rect x="320" y="0" width="1" height="238"/><rect x="327" y="0" width="1" height="238"/><rect x="335" y="0" width="1" height="238"/><rect x="351" y="0" width="1" height="238"/><rect x="358" y="0" width="1" height="238"/><rect x="366" y="0" width="1" height="238"/><rect x="374" y="0" width="1" height="238"/><rect x="0" y="10" width="377" height="1"/><rect x="0" y="18" width="377" height="1"/><rect x="0" y="26" width="377" height="1"/><rect x="0" y="33" width="377" height="1"/><rect x="0" y="49" width="377" height="1"/><rect x="0" y="57" width="377" height="1"/><rect x="0" y="64" width="377" height="1"/><rect x="0" y="72" width="377" height="1"/><rect x="0" y="88" width="377" height="1"/><rect x="0" y="95" width="377" height="1"/><rect x="0" y="103" width="377" height="1"/><rect x="0" y="111" width="377" height="1"/><rect x="0" y="126" width="377" height="1"/><rect x="0" y="134" width="377" height="1"/><rect x="0" y="142" width="377" height="1"/><rect x="0" y="149" width="377" height="1"/><rect x="0" y="165" width="377" height="1"/><rect x="0" y="173" width="377" height="1"/><rect x="0" y="180" width="377" height="1"/><rect x="0" y="188" width="377" height="1"/><rect x="0" y="204" width="377" height="1"/><rect x="0" y="211" width="377" height="1"/><rect x="0" y="219" width="377" height="1"/><rect x="0" y="227" width="377" height="1"/></g><g fill="#7e838a"><rect x="33" y="0" width="1" height="238"/><rect x="72" y="0" width="1" height="238"/><rect x="111" y="0" width="1" height="238"/><rect x="149" y="0" width="1" height="238"/><rect x="188" y="0" width="1" height="238"/><rect x="227" y="0" width="1" height="238"/><rect x="265" y="0" width="1" height="238"/><rect x="304" y="0" width="1" height="238"/><rect x="343" y="0" width="1" height="238"/><rect x="0" y="2" width="377" height="1"/><rect x="0" y="41" width="377" height="1"/><rect x="0" y="80" width="377" height="1"/><rect x="0" y="118" width="377" height="1"/><rect x="0" y="157" width="377" height="1"/><rect x="0" y="196" width="377" height="1"/><rect x="0" y="235" width="377" height="1"/></g><rect x="187" y="0" width="2" height="120" fill="#45993f"/><rect x="189" y="118" width="189" height="2" fill="#a63d3d"/></svg><svg style="position:absolute;left:443px;top:173px;" width="377" height="239" viewBox="0 0 377 239"><rect width="377" height="239" fill="#9da3aa"/><path d="M-414.5 198.0L913.7 1434.7M-421.3 203.6L120.9 -10.4M-405.6 194.5L897.9 1370.4M-419.2 205.7L123.1 -10.0M-397.0 191.1L883.3 1311.1M-417.0 207.8L125.3 -9.6M-388.4 187.8L869.8 1256.1M-414.7 209.9L127.6 -9.2M-371.9 181.3L845.7 1157.6M-410.2 214.3L132.1 -8.5M-363.8 178.1L834.8 1113.3M-407.9 216.5L134.3 -8.1M-355.9 175.0L824.6 1071.9M-405.6 218.7L136.6 -7.7M-348.1 172.0L815.1 1033.0M-403.2 221.0L138.9 -7.3M-333.0 166.1L797.7 962.2M-398.5 225.6L143.5 -6.5M-325.6 163.2L789.8 929.8M-396.0 227.9L145.8 -6.1M-318.4 160.3L782.3 899.3M-393.5 230.3L148.1 -5.7M-311.3 157.6L775.2 870.4M-391.0 232.7L150.5 -5.3M-297.4 152.1L762.1 817.0M-386.0 237.6L155.2 -4.5M-290.6 149.5L756.1 792.3M-383.4 240.1L157.6 -4.1M-283.9 146.9L750.3 768.9M-380.7 242.6L160.0 -3.7M-277.4 144.3L744.8 746.5M-378.1 245.2L162.4 -3.3M-264.6 139.3L734.6 704.9M-372.7 250.4L167.2 -2.5M-258.3 136.8L729.9 685.4M-369.9 253.0L169.6 -2.1M-252.2 134.4L725.3 666.8M-367.1 255.7L172.1 -1.7M-246.1 132.1L720.9 649.1M-364.3 258.5L174.5 -1.3M-234.3 127.4L712.7 615.6M-358.5 264.0L179.5 -0.4M-228.6 125.2L708.9 599.9M-355.6 266.8L182.0 0.0M-222.9 123.0L705.2 584.9M-352.6 269.7L184.5 0.4M-217.3 120.8L701.6 570.4M-349.6 272.6L187.0 0.9M-206.3 116.5L694.9 543.0M-343.4 278.5L192.1 1.7M-201.0 114.4L691.7 530.0M-340.3 281.5L194.7 2.2M-195.7 112.3L688.7 517.5M-337.1 284.6L197.2 2.6M-190.5 110.3L685.7 505.5M-333.9 287.7L199.8 3.0M-180.3 106.3L680.1 482.6M-327.3 294.1L205.0 3.9M-175.3 104.4L677.4 471.8M-323.9 297.3L207.7 4.4M-170.4 102.4L674.9 461.3M-320.5 300.6L210.3 4.8M-165.6 100.5L672.4 451.1M-317.0 303.9L213.0 5.3M-156.1 96.8L667.6 431.7M-310.0 310.7L218.3 6.2M-151.5 95.0L665.4 422.5M-306.4 314.2L221.0 6.6M-146.9 93.2L663.2 413.5M-302.7 317.7L223.7 7.1M-142.4 91.4L661.0 404.9M-299.0 321.3L226.5 7.6M-133.5 88.0L656.9 388.2M-291.4 328.6L232.0 8.5M-129.2 86.3L655.0 380.3M-287.5 332.4L234.7 9.0M-124.9 84.6L653.1 372.5M-283.5 336.2L237.5 9.4M-120.7 83.0L651.3 365.0M-279.5 340.0L240.3 9.9M-112.4 79.7L647.7 350.6M-271.3 347.9L246.0 10.9M-108.3 78.1L646.0 343.7M-267.1 352.0L248.8 11.3M-104.3 76.6L644.4 336.9M-262.9 356.1L251.7 11.8M-100.3 75.0L642.8 330.4M-258.5 360.2L254.5 12.3M-92.6 72.0L639.7 317.7M-249.6 368.8L260.3 13.3M-88.8 70.5L638.2 311.7M-245.1 373.2L263.3 13.8M-85.0 69.0L636.7 305.7M-240.5 377.6L266.2 14.3M-81.3 67.5L635.3 300.0M-235.8 382.1L269.2 14.8M-74.0 64.7L632.6 288.8M-226.1 391.4L275.1 15.8M-70.4 63.3L631.2 283.4M-221.2 396.1L278.1 16.3M-66.8 61.9L630.0 278.2M-216.2 401.0L281.2 16.8M-63.3 60.5L628.7 273.0M-211.1 405.9L284.2 17.4M-56.5 57.8L626.3 263.1M-200.6 416.0L290.3 18.4M-53.1 56.5L625.1 258.3M-195.2 421.2L293.4 18.9M-49.7 55.2L623.9 253.6M-189.7 426.4L296.5 19.5M-46.4 53.9L622.8 249.0M-184.1 431.8L299.7 20.0M-39.9 51.4L620.6 240.2M-172.7 442.9L306.0 21.1M-36.8 50.1L619.6 235.9M-166.8 448.5L309.1 21.6M-33.6 48.9L618.5 231.7M-160.8 454.3L312.3 22.1M-30.5 47.7L617.5 227.5M-154.6 460.2L315.6 22.7M-24.4 45.3L615.6 219.5M-142.0 472.3L322.0 23.8M-21.3 44.1L614.6 215.7M-135.6 478.5L325.3 24.3M-18.4 42.9L613.7 211.8M-129.0 484.9L328.6 24.9M-15.4 41.8L612.8 208.1M-122.2 491.4L331.9 25.5M-9.6 39.5L611.0 200.9M-108.3 504.7L338.6 26.6M-6.8 38.4L610.1 197.4M-101.2 511.6L342.0 27.2M-3.9 37.3L609.3 193.9M-93.9 518.7L345.3 27.7M-1.1 36.2L608.5 190.5M-86.4 525.8L348.8 28.3M4.4 34.0L606.8 183.9M-71.0 540.7L355.6 29.5M7.1 33.0L606.1 180.7M-63.1 548.3L359.1 30.1M9.7 31.9L605.3 177.6M-55.0 556.1L362.6 30.7M12.4 30.9L604.5 174.5M-46.7 564.1L366.1 31.3M17.6 28.8L603.0 168.5M-29.5 580.6L373.2 32.5M20.2 27.8L602.3 165.6M-20.6 589.1L376.8 33.1M22.7 26.8L601.6 162.7M-11.6 597.9L380.4 33.7M25.2 25.8L600.9 159.9M-2.3 606.8L384.0 34.3M30.2 23.9L599.6 154.4M17.0 625.3L391.3 35.5M32.6 22.9L598.9 151.7M26.9 634.9L395.0 36.2M35.1 22.0L598.3 149.0M37.1 644.7L398.7 36.8M37.5 21.1L597.6 146.4M47.6 654.8L402.4 37.4M42.2 19.2L596.4 141.3M69.3 675.7L410.0 38.7M44.5 18.3L595.8 138.9M80.6 686.6L413.8 39.4M46.8 17.4L595.2 136.4M92.2 697.7L417.6 40.0M49.1 16.5L594.6 134.0M104.1 709.2L421.4 40.7M53.6 14.8L593.4 129.3M128.8 733.0L429.2 42.0M55.8 13.9L592.9 127.1M141.7 745.4L433.1 42.7M58.0 13.0L592.3 124.8M155.0 758.1L437.1 43.3M60.2 12.2L591.8 122.6M168.6 771.2L441.1 44.0M64.4 10.5L590.7 118.2M197.0 798.5L449.1 45.4M66.6 9.7L590.2 116.1M211.8 812.8L453.1 46.0M68.7 8.8L589.7 114.0M227.1 827.5L457.2 46.7M70.7 8.0L589.2 112.0M242.9 842.7L461.3 47.4M74.8 6.4L588.2 107.9M275.8 874.4L469.6 48.8M76.8 5.6L587.7 106.0M293.1 891.0L473.8 49.6M78.8 4.9L587.2 104.0M311.0 908.2L478.0 50.3M80.8 4.1L586.8 102.1M329.4 925.9L482.2 51.0M84.7 2.6L585.8 98.4M368.1 963.2L490.8 52.4M86.7 1.8L585.4 96.5M388.5 982.8L495.1 53.2M88.6 1.0L584.9 94.7M409.6 1003.1L499.5 53.9M90.5 0.3L584.5 92.9M431.4 1024.2L503.9 54.7M94.2 -1.2L583.6 89.4M477.6 1068.6L512.7 56.2M96.1 -1.9L583.2 87.7M502.0 1092.0L517.2 56.9M97.9 -2.6L582.8 86.0M527.3 1116.4L521.7 57.7M99.7 -3.3L582.4 84.3M553.6 1141.7L526.2 58.5M103.3 -4.7L581.6 81.0M609.5 1195.5L535.4 60.0M105.1 -5.4L581.2 79.4M639.2 1224.1L540.0 60.8M106.8 -6.1L580.8 77.9M670.2 1253.9L544.7 61.6M108.6 -6.8L580.4 76.3M702.6 1285.0L549.4 62.4M112.0 -8.1L579.7 73.2M771.7 1351.6L558.9 64.0M113.7 -8.8L579.3 71.7M808.7 1387.1L563.6 64.8M115.4 -9.4L578.9 70.2M847.4 1424.4L568.5 65.6M117.0 -10.1L578.6 68.7M888.1 1463.6L573.3 66.5" stroke="#93989f" stroke-width="1" fill="none" shape-rendering="crispEdges"/><path d="M-423.5 201.5L930.8 1504.7M-423.5 201.5L118.7 -10.7M-380.1 184.5L857.3 1205.1M-412.5 212.1L129.8 -8.9M-340.5 169.0L806.2 996.5M-400.9 223.3L141.2 -6.9M-304.2 154.8L768.5 843.0M-388.5 235.1L152.8 -4.9M-270.9 141.8L739.6 725.2M-375.4 247.8L164.8 -2.9M-240.2 129.7L716.7 632.0M-361.4 261.2L177.0 -0.8M-211.8 118.6L698.2 556.4M-346.5 275.5L189.6 1.3M-185.4 108.3L682.9 493.9M-330.6 290.9L202.4 3.5M-160.8 98.7L670.0 441.3M-313.5 307.3L215.6 5.7M-137.9 89.7L659.0 396.4M-295.2 324.9L229.2 8.0M-116.5 81.3L649.5 357.7M-275.5 343.9L243.1 10.4M-96.4 73.5L641.2 324.0M-254.1 364.5L257.4 12.8M-77.6 66.1L633.9 294.3M-231.0 386.7L272.1 15.3M-59.9 59.2L627.5 268.0M-205.9 410.9L287.3 17.9M-43.2 52.6L621.7 244.6M-178.4 437.3L302.8 20.5M-27.4 46.4L616.5 223.5M-148.4 466.2L318.8 23.2M-12.5 40.6L611.9 204.5M-115.4 498.0L335.2 26.0M1.6 35.1L607.6 187.2M-78.8 533.2L352.2 28.9M15.0 29.8L603.8 171.5M-38.2 572.3L369.6 31.9M27.7 24.9L600.2 157.1M7.2 616.0L387.6 34.9M39.8 20.1L597.0 143.9M58.3 665.1L406.2 38.1M51.3 15.6L594.0 131.7M116.3 720.9L425.3 41.3M62.3 11.3L591.2 120.4M182.6 784.7L445.1 44.7M72.8 7.2L588.7 109.9M259.1 858.3L465.4 48.1M82.8 3.3L586.3 100.2M348.4 944.3L486.5 51.7M92.4 -0.4L584.1 91.1M454.1 1046.0L508.3 55.4M101.5 -4.0L582.0 82.7M581.0 1168.1L530.8 59.2M110.3 -7.4L580.0 74.7M736.4 1317.6L554.1 63.2M118.7 -10.7L578.2 67.3M930.8 1504.7L578.2 67.3" stroke="#7e838a" stroke-width="1" fill="none" shape-rendering="crispEdges"/><path d="M188.5 119.5L621.7 244.6" stroke="#a63d3d" stroke-width="2" shape-rendering="crispEdges"/><path d="M188.5 119.5L302.8 20.5" stroke="#45993f" stroke-width="2" shape-rendering="crispEdges"/></svg><svg style="position:absolute;left:62px;top:173px;" width="51" height="20" viewBox="0 0 51 20"><path d="M0 0 H51 V17 L48 20 H0Z" fill="#cdd1d8"/><rect x="40" y="2" width="1" height="17" fill="#6a6e75"/><path d="M42 8 H49 L45.5 12Z" fill="#6a6e75"/></svg><div style="position:absolute;left:69.5px;top:175.52px;font-size:13.5px;line-height:15px;color:#62666d;font-weight:bold;white-space:nowrap;">Top</div><svg style="position:absolute;left:443px;top:173px;" width="103" height="20" viewBox="0 0 103 20"><path d="M0 0 H103 V17 L100 20 H0Z" fill="#8aa2ee"/><rect x="92" y="2" width="1" height="17" fill="#222"/><path d="M94 8 H101 L97.5 12Z" fill="#222"/></svg><div style="position:absolute;left:450.5px;top:175.52px;font-size:13.5px;line-height:15px;color:#1e2233;font-weight:bold;white-space:nowrap;">Perspective</div><svg style="position:absolute;left:62px;top:416px;" width="64" height="20" viewBox="0 0 64 20"><path d="M0 0 H64 V17 L61 20 H0Z" fill="#cdd1d8"/><rect x="53" y="2" width="1" height="17" fill="#6a6e75"/><path d="M55 8 H62 L58.5 12Z" fill="#6a6e75"/></svg><div style="position:absolute;left:69.5px;top:418.52px;font-size:13.5px;line-height:15px;color:#62666d;font-weight:bold;white-space:nowrap;">Front</div><svg style="position:absolute;left:443px;top:416px;" width="63" height="20" viewBox="0 0 63 20"><path d="M0 0 H63 V17 L60 20 H0Z" fill="#cdd1d8"/><rect x="52" y="2" width="1" height="17" fill="#6a6e75"/><path d="M54 8 H61 L57.5 12Z" fill="#6a6e75"/></svg><div style="position:absolute;left:450.5px;top:418.52px;font-size:13.5px;line-height:15px;color:#62666d;font-weight:bold;white-space:nowrap;">Right</div><svg style="position:absolute;left:95px;top:344px;" width="45" height="40" viewBox="0 0 45 40"><path d="M3.5 2 V31.5 H34.5" fill="none" stroke="#55595e" stroke-width="1"/></svg><div style="position:absolute;left:101.5px;top:334.17px;font-size:12.5px;line-height:15px;color:#55595e;font-weight:normal;white-space:nowrap;">y</div><div style="position:absolute;left:131px;top:364.67px;font-size:12.5px;line-height:15px;color:#55595e;font-weight:normal;white-space:nowrap;">x</div><svg style="position:absolute;left:95px;top:587px;" width="45" height="40" viewBox="0 0 45 40"><path d="M3.5 2 V31.5 H34.5" fill="none" stroke="#55595e" stroke-width="1"/></svg><div style="position:absolute;left:101.5px;top:577.17px;font-size:12.5px;line-height:15px;color:#55595e;font-weight:normal;white-space:nowrap;">z</div><div style="position:absolute;left:131px;top:607.67px;font-size:12.5px;line-height:15px;color:#55595e;font-weight:normal;white-space:nowrap;">x</div><svg style="position:absolute;left:476px;top:587px;" width="45" height="40" viewBox="0 0 45 40"><path d="M3.5 2 V31.5 H33.5" fill="none" stroke="#55595e" stroke-width="1"/></svg><div style="position:absolute;left:482.5px;top:577.17px;font-size:12.5px;line-height:15px;color:#55595e;font-weight:normal;white-space:nowrap;">z</div><div style="position:absolute;left:512px;top:607.67px;font-size:12.5px;line-height:15px;color:#55595e;font-weight:normal;white-space:nowrap;">y</div><svg style="position:absolute;left:470px;top:340px;" width="50" height="50" viewBox="0 0 50 50"><path d="M9.5 36 V12 M9.5 36 L23.5 23.5 M9.5 36 L35.5 43.5" fill="none" stroke="#55595e" stroke-width="1"/></svg><div style="position:absolute;left:482px;top:338.19px;font-size:11px;line-height:15px;color:#55595e;font-weight:normal;white-space:nowrap;">z</div><div style="position:absolute;left:498px;top:354.69px;font-size:11px;line-height:15px;color:#55595e;font-weight:normal;white-space:nowrap;">y</div><div style="position:absolute;left:509px;top:372.69px;font-size:11px;line-height:15px;color:#55595e;font-weight:normal;white-space:nowrap;">x</div><svg style="position:absolute;left:61px;top:655px;" width="90" height="25" viewBox="0 0 90 25"><path d="M0.5 0 V14 L9 23.5 H83 Q86.5 23.5 86.5 20 V0" fill="#eceef2" stroke="#c3cadb" stroke-width="1"/></svg><div style="position:absolute;left:73px;top:660.70px;font-size:13px;line-height:15px;color:#222;font-weight:normal;white-space:nowrap;">Perspective</div><div style="position:absolute;left:161px;top:660.70px;font-size:13px;line-height:15px;color:#222;font-weight:normal;white-space:nowrap;">Top</div><div style="position:absolute;left:200px;top:660.70px;font-size:13px;line-height:15px;color:#222;font-weight:normal;white-space:nowrap;">Front</div><div style="position:absolute;left:249px;top:660.70px;font-size:13px;line-height:15px;color:#222;font-weight:normal;white-space:nowrap;">Right</div><svg style="position:absolute;left:300px;top:663px;" width="11" height="10" viewBox="0 0 11 10"><path d="M3.5 0.5 H6.5 V3.5 H9.5 V6.5 H6.5 V9.5 H3.5 V6.5 H0.5 V3.5 H3.5Z" fill="#fff" stroke="#777" stroke-width="1"/></svg><div style="position:absolute;left:0px;top:681px;width:1015px;height:1px;background:#d0d5e0"></div><div style="position:absolute;left:0px;top:682px;width:1015px;height:24px;background:#e9ebef"></div><div style="position:absolute;left:0px;top:686px;width:1px;height:17px;background:#d5dae4"></div><div style="position:absolute;left:2px;top:686px;width:1px;height:17px;background:#c9cfdc"></div><div style="position:absolute;left:0;top:682px;width:1015px;height:20px;overflow:hidden"><div style="position:absolute;left:6.5px;top:9px;width:13px;height:14px;border:1px solid #222;box-sizing:border-box;background:#fff"></div><div style="position:absolute;left:22px;top:9.12px;font-size:13.5px;line-height:15px;color:#111;font-weight:normal;white-space:nowrap;">End</div><div style="position:absolute;left:52px;top:9px;width:13px;height:14px;border:1px solid #222;box-sizing:border-box;background:#fff"></div><div style="position:absolute;left:69px;top:9.12px;font-size:13.5px;line-height:15px;color:#111;font-weight:normal;white-space:nowrap;">Near</div><div style="position:absolute;left:105px;top:9px;width:13px;height:14px;border:1px solid #222;box-sizing:border-box;background:#fff"></div><div style="position:absolute;left:121px;top:9.12px;font-size:13.5px;line-height:15px;color:#111;font-weight:normal;white-space:nowrap;">Point</div><div style="position:absolute;left:160px;top:9px;width:13px;height:14px;border:1px solid #222;box-sizing:border-box;background:#fff"></div><div style="position:absolute;left:176px;top:9.12px;font-size:13.5px;line-height:15px;color:#111;font-weight:normal;white-space:nowrap;">Mid</div><div style="position:absolute;left:207px;top:9px;width:13px;height:14px;border:1px solid #222;box-sizing:border-box;background:#fff"></div><div style="position:absolute;left:223px;top:9.12px;font-size:13.5px;line-height:15px;color:#111;font-weight:normal;white-space:nowrap;">Cen</div><div style="position:absolute;left:254px;top:9px;width:13px;height:14px;border:1px solid #222;box-sizing:border-box;background:#fff"></div><div style="position:absolute;left:270px;top:9.12px;font-size:13.5px;line-height:15px;color:#111;font-weight:normal;white-space:nowrap;">Int</div><div style="position:absolute;left:294px;top:9px;width:13px;height:14px;border:1px solid #222;box-sizing:border-box;background:#fff"></div><div style="position:absolute;left:310px;top:9.12px;font-size:13.5px;line-height:15px;color:#111;font-weight:normal;white-space:nowrap;">Perp</div><div style="position:absolute;left:346px;top:9px;width:13px;height:14px;border:1px solid #222;box-sizing:border-box;background:#fff"></div><div style="position:absolute;left:361px;top:9.12px;font-size:13.5px;line-height:15px;color:#111;font-weight:normal;white-space:nowrap;">Tan</div><div style="position:absolute;left:390px;top:9px;width:13px;height:14px;border:1px solid #222;box-sizing:border-box;background:#fff"></div><div style="position:absolute;left:406px;top:9.12px;font-size:13.5px;line-height:15px;color:#111;font-weight:normal;white-space:nowrap;">Quad</div><div style="position:absolute;left:447px;top:9px;width:13px;height:14px;border:1px solid #222;box-sizing:border-box;background:#fff"></div><div style="position:absolute;left:463px;top:9.12px;font-size:13.5px;line-height:15px;color:#111;font-weight:normal;white-space:nowrap;">Knot</div><div style="position:absolute;left:499px;top:9px;width:13px;height:14px;border:1px solid #222;box-sizing:border-box;background:#fff"></div><div style="position:absolute;left:515px;top:9.12px;font-size:13.5px;line-height:15px;color:#111;font-weight:normal;white-space:nowrap;">Vertex</div><div style="position:absolute;left:563px;top:9px;width:13px;height:14px;border:1px solid #bbb;box-sizing:border-box;background:#e2e3e6"></div><div style="position:absolute;left:578px;top:9.12px;font-size:13.5px;line-height:15px;color:#222;font-weight:normal;white-space:nowrap;">Project</div><div style="position:absolute;left:638px;top:9px;width:13px;height:14px;border:1px solid #bbb;box-sizing:border-box;background:#e2e3e6"></div><div style="position:absolute;left:654px;top:9.12px;font-size:13.5px;line-height:15px;color:#222;font-weight:normal;white-space:nowrap;">Disable</div></div><div style="position:absolute;left:0px;top:706px;width:1015px;height:16px;background:#e9ebef"></div><div style="position:absolute;left:0px;top:706px;width:1015px;height:1px;background:#c3cadb"></div><div style="position:absolute;left:44px;top:707px;width:1px;height:15px;background:#c3cadb"></div><div style="position:absolute;left:0px;top:707px;width:44px;height:15px;overflow:hidden"><div style="position:absolute;left:-1px;top:3.32px;font-size:13.5px;line-height:15px;color:#111;font-weight:normal;white-space:nowrap;">CPlane</div></div><div style="position:absolute;left:125px;top:707px;width:1px;height:15px;background:#c3cadb"></div><div style="position:absolute;left:44px;top:707px;width:81px;height:15px;overflow:hidden"><div style="position:absolute;left:17px;top:3.32px;font-size:13.5px;line-height:15px;color:#111;font-weight:normal;white-space:nowrap;">x 3.046</div></div><div style="position:absolute;left:206px;top:707px;width:1px;height:15px;background:#c3cadb"></div><div style="position:absolute;left:125px;top:707px;width:81px;height:15px;overflow:hidden"><div style="position:absolute;left:10px;top:3.32px;font-size:13.5px;line-height:15px;color:#111;font-weight:normal;white-space:nowrap;">y -15.167</div></div><div style="position:absolute;left:287px;top:707px;width:1px;height:15px;background:#c3cadb"></div><div style="position:absolute;left:206px;top:707px;width:81px;height:15px;overflow:hidden"><div style="position:absolute;left:31px;top:3.32px;font-size:13.5px;line-height:15px;color:#111;font-weight:normal;white-space:nowrap;">z 0</div></div><div style="position:absolute;left:368px;top:707px;width:1px;height:15px;background:#c3cadb"></div><div style="position:absolute;left:287px;top:707px;width:81px;height:15px;overflow:hidden"><div style="position:absolute;left:8px;top:3.32px;font-size:13.5px;line-height:15px;color:#111;font-weight:normal;white-space:nowrap;">Millimeters</div></div><div style="position:absolute;left:523px;top:707px;width:1px;height:15px;background:#c3cadb"></div><div style="position:absolute;left:368px;top:707px;width:155px;height:15px;overflow:hidden"><div style="position:absolute;left:20px;top:3.32px;font-size:13.5px;line-height:15px;color:#111;font-weight:normal;white-space:nowrap;">Default</div></div><div style="position:absolute;left:589px;top:707px;width:1px;height:15px;background:#c3cadb"></div><div style="position:absolute;left:523px;top:707px;width:66px;height:15px;overflow:hidden"><div style="position:absolute;left:3px;top:3.32px;font-size:13.5px;line-height:15px;color:#111;font-weight:normal;white-space:nowrap;">Grid Snap</div></div><div style="position:absolute;left:633px;top:707px;width:1px;height:15px;background:#c3cadb"></div><div style="position:absolute;left:589px;top:707px;width:44px;height:15px;overflow:hidden"><div style="position:absolute;left:4px;top:3.32px;font-size:13.5px;line-height:15px;color:#111;font-weight:normal;white-space:nowrap;">Ortho</div></div><div style="position:absolute;left:680px;top:707px;width:1px;height:15px;background:#c3cadb"></div><div style="position:absolute;left:633px;top:707px;width:47px;height:15px;overflow:hidden"><div style="position:absolute;left:5px;top:3.32px;font-size:13.5px;line-height:15px;color:#111;font-weight:normal;white-space:nowrap;">Planar</div></div><div style="position:absolute;left:728px;top:707px;width:1px;height:15px;background:#c3cadb"></div><div style="position:absolute;left:680px;top:707px;width:48px;height:15px;overflow:hidden"><div style="position:absolute;left:4px;top:3.32px;font-size:13.5px;line-height:15px;color:#111;font-weight:normal;white-space:nowrap;">Osnap</div></div><div style="position:absolute;left:728px;top:707px;width:74px;height:15px;background:#cfd8f0"></div><div style="position:absolute;left:802px;top:707px;width:1px;height:15px;background:#c3cadb"></div><div style="position:absolute;left:728px;top:707px;width:74px;height:15px;overflow:hidden"><div style="position:absolute;left:2px;top:3.32px;font-size:13.5px;line-height:15px;color:#111;font-weight:bold;white-space:nowrap;">SmartTrack</div></div><div style="position:absolute;left:859px;top:707px;width:1px;height:15px;background:#c3cadb"></div><div style="position:absolute;left:802px;top:707px;width:57px;height:15px;overflow:hidden"><div style="position:absolute;left:3px;top:3.32px;font-size:13.5px;line-height:15px;color:#111;font-weight:normal;white-space:nowrap;">Gumball</div></div><div style="position:absolute;left:951px;top:707px;width:1px;height:15px;background:#c3cadb"></div><div style="position:absolute;left:859px;top:707px;width:92px;height:15px;overflow:hidden"><div style="position:absolute;left:2px;top:3.32px;font-size:13.5px;line-height:15px;color:#111;font-weight:normal;white-space:nowrap;">Record History</div></div><div style="position:absolute;left:990px;top:707px;width:1px;height:15px;background:#c3cadb"></div><div style="position:absolute;left:951px;top:707px;width:39px;height:15px;overflow:hidden"><div style="position:absolute;left:3px;top:3.32px;font-size:13.5px;line-height:15px;color:#111;font-weight:normal;white-space:nowrap;">Filter</div></div><div style="position:absolute;left:1015px;top:707px;width:1px;height:15px;background:#c3cadb"></div><div style="position:absolute;left:990px;top:707px;width:25px;height:15px;overflow:hidden"><div style="position:absolute;left:2px;top:3.32px;font-size:13.5px;line-height:15px;color:#111;font-weight:normal;white-space:nowrap;">A...</div></div><div style="position:absolute;left:373px;top:710px;width:12px;height:12px;background:#000"></div><div style="position:absolute;left:826px;top:170px;width:189px;height:512px;background:#e9ebef"></div><div style="position:absolute;left:832px;top:177.82px;font-size:13.5px;line-height:15px;color:#222;font-weight:normal;white-space:nowrap;">Help</div><div style="position:absolute;left:866px;top:183px;width:149px;height:1px;background:#c9cfdc"></div><div style="position:absolute;left:866px;top:185px;width:149px;height:1px;background:#cfd5e2"></div><div style="position:absolute;left:832.5px;top:202.5px;width:16px;height:16px;border-radius:50%;background:conic-gradient(from 0deg,#ff3030,#ffe000,#30e030,#00e0e0,#3040ff,#e020e0,#ff3030);box-shadow:0 0 0 0.6px #444"></div><div style="position:absolute;left:837px;top:207px;width:7px;height:7px;border-radius:50%;background:#fff"></div><svg style="position:absolute;left:860px;top:201px;" width="18" height="18" viewBox="0 0 18 18"><path d="M1 2 L16 5 L15 13 L8 17 L2 13Z" fill="#ee4a1a" stroke="#222" stroke-width="0.8"/><path d="M2 10 L8 13 L15 10 V13 L8 17 L2 13Z" fill="#fff"/><path d="M3 12 L8 15 L15 12 V13 L8 17 L3 14Z" fill="#3050a0"/></svg><svg style="position:absolute;left:888px;top:201px;" width="18" height="18" viewBox="0 0 18 18"><defs><radialGradient id="bs2" cx="0.35" cy="0.35" r="0.75"><stop offset="0" stop-color="#bcd0ff"/><stop offset="0.45" stop-color="#2a50d8"/><stop offset="1" stop-color="#0a1a60"/></radialGradient></defs><circle cx="8" cy="10" r="7" fill="url(#bs2)"/><path d="M12 4 L16 1 M13 1 H16.5 V4" stroke="#333" fill="none" stroke-width="1"/></svg><svg style="position:absolute;left:917px;top:202px;" width="17" height="17" viewBox="0 0 17 17"><path d="M3 15 L12 4 L15 6 L6 16Z" fill="#eee" stroke="#555" stroke-width="0.8"/><path d="M10 6 L12 3.5 L15.5 6 L13 8.5Z" fill="#d03020"/></svg><svg style="position:absolute;left:944px;top:203px;" width="18" height="15" viewBox="0 0 18 15"><path d="M1 3 H6 L8 5 H15 V13 H1Z" fill="#f2cc40" stroke="#6a5000" stroke-width="0.8"/><path d="M1 13 L3.5 7 H17 L15 13Z" fill="#f7d450" stroke="#6a5000" stroke-width="0.8"/></svg><svg style="position:absolute;left:969px;top:195px;" width="30" height="30" viewBox="0 0 30 30"><path d="M0.5 30 V0.5 H28.5 V30" fill="#eceef2" stroke="#c3cadb"/></svg><svg style="position:absolute;left:975px;top:203px;" width="15" height="15" viewBox="0 0 15 15"><rect x="0.5" y="0.5" width="14" height="14" fill="#fff" stroke="#333"/><rect x="1" y="1" width="13" height="2" fill="#7a7ee0"/><path d="M2 14 V10 Q2 4.5 7.5 4.5 Q13 4.5 13 10 V14Z" fill="#3a5cd0"/><text x="7.5" y="13" font-family="Liberation Sans" font-size="9" font-weight="bold" fill="#fff" text-anchor="middle">?</text></svg><svg style="position:absolute;left:1003px;top:205px;" width="12" height="16" viewBox="0 0 12 16"><path d="M9 1 L11 3 L13 2 L13 5 L9 8 L6 6 L7 3Z" fill="none" stroke="#c8ccd4" stroke-width="1"/><circle cx="10" cy="9" r="5" fill="none" stroke="#c8ccd4" stroke-width="1.3" stroke-dasharray="2 1.5"/></svg><svg style="position:absolute;left:826px;top:223px;" width="189" height="460" viewBox="0 0 189 460"><path d="M2.5 460 V0.5 H143 M172 0.5 H189" fill="none" stroke="#c3cadb"/></svg><div style="position:absolute;left:830px;top:231px;width:185px;height:24px;background:#fff;border:1px solid #b8c2d8;border-right:none;box-sizing:border-box"></div><div style="position:absolute;left:835px;top:274px;width:13px;height:13px;border:1px solid #222;box-sizing:border-box;background:#fff"></div><svg style="position:absolute;left:835px;top:274px;" width="13" height="13" viewBox="0 0 13 13"><path d="M2.5 6.5 L5.5 10 L11 2.5" fill="none" stroke="#222" stroke-width="1.3"/></svg><div style="position:absolute;left:850px;top:273.65px;font-size:14px;line-height:15px;color:#222;font-weight:normal;white-space:nowrap;">Auto-Update</div><div style="position:absolute;left:837px;top:291px;width:178px;height:1px;background:#dde1ea"></div><svg style="position:absolute;left:1010px;top:165px;" width="5" height="58" viewBox="0 0 5 58"><rect x="1" y="0" width="6" height="58" rx="3" fill="#55585d"/><rect x="2.5" y="27" width="3" height="1.6" fill="#3fcf5a"/><rect x="2.5" y="30" width="3" height="1.6" fill="#3fcf5a"/><rect x="2.5" y="33" width="3" height="1.6" fill="#3fcf5a"/><rect x="2.5" y="36" width="3" height="1.6" fill="#3fcf5a"/><rect x="2.5" y="39" width="3" height="1.6" fill="#3fcf5a"/><rect x="2.5" y="42" width="3" height="1.6" fill="#3fcf5a"/><rect x="2.5" y="45" width="3" height="1.6" fill="#3fcf5a"/><rect x="2.5" y="48" width="3" height="1.6" fill="#3fcf5a"/><rect x="2.5" y="51" width="3" height="1.6" fill="#3fcf5a"/><rect x="2.5" y="54" width="3" height="1.6" fill="#3fcf5a"/></svg><div style="position:absolute;left:828px;top:676px;width:187px;height:1px;background:#c3cadb"></div><svg style="position:absolute;left:420px;top:340px;" width="180" height="30" viewBox="0 0 180 30"><g fill="none" stroke="#820a10" stroke-width="3.3" stroke-linejoin="round"><path d="M4.5 10 V17 Q4.5 19.5 7 19.5 H16 Q18.5 19.5 18.5 17 V10 M11.5 10 V19.5"/><path d="M24.1 10 V17 Q24.1 19.5 26.6 19.5 H36.3 Q38.8 19.5 38.8 17 V10 M31.45 10 V19.5"/><path d="M44.5 10 V17 Q44.5 19.5 47 19.5 H56.3 Q58.8 19.5 58.8 17 V10 M51.65 10 V19.5"/><path d="M78.7 5.3 V19.5 H71.8 Q69.3 19.5 69.3 17 V13 Q69.3 10.5 71.8 10.5 H78.7"/><path d="M92.4 10.5 H86.9 Q84.4 10.5 84.4 13 V16 Q84.4 18.5 86.9 18.5 H92.4 M92.4 10.5 V21 Q92.4 23.4 90 23.4 H84"/><path d="M97.7 19.5 V13 Q97.7 10.5 100.2 10.5 H106.2 M97.7 9 V13"/><path d="M108.3 10.5 H115.6 Q118.1 10.5 118.1 13 V19.5 H111.5 Q109 19.5 109 17 V16.8 Q109 14.5 111.5 14.5 H118.1"/><path d="M122.6 9 V21"/><path d="M142.8 10.5 H136.3 Q133.8 10.5 133.8 13 V17 Q133.8 19.5 136.3 19.5 H142.8"/><path d="M148.5 10.5 H153.6 Q156.1 10.5 156.1 13 V17 Q156.1 19.5 153.6 19.5 H148.5 Q146 19.5 146 17 V13 Q146 10.5 148.5 10.5 Z"/><path d="M160.5 21 V10.5 H171.4 Q173.9 10.5 173.9 13 V21 M167.2 10.5 V21"/></g><g fill="#820a10"><rect x="63" y="17.6" width="3.2" height="3.3"/><rect x="121.1" y="5" width="3" height="3.2"/><rect x="126.8" y="17.6" width="3.2" height="3.3"/></g></svg><div style="position:absolute;left:776px;top:645.22px;font-size:21px;line-height:25px;color:rgba(140,141,146,0.62);font-weight:normal;white-space:nowrap;">激活 Windows</div><div style="position:absolute;left:776px;top:672.65px;font-size:14px;line-height:15px;color:rgba(140,141,146,0.55);font-weight:normal;white-space:nowrap;">转到“设置”以激活 Windows。</div><svg style="position:absolute;left:770px;top:652px;" width="64" height="46" viewBox="0 0 64 46"><ellipse cx="30.5" cy="19" rx="14" ry="12.5" fill="#fff" stroke="#888" stroke-width="0.7"/><path d="M22 28 L20 34 L27 30Z" fill="#fff"/><ellipse cx="43" cy="28" rx="12" ry="11" fill="#fff" stroke="#555" stroke-width="0.9"/><path d="M50 36 L54 42 L45 38Z" fill="#fff" stroke="#666" stroke-width="0.6"/><circle cx="25" cy="16" r="1.6" fill="#666"/><circle cx="36" cy="16" r="1.6" fill="#666"/><circle cx="39.5" cy="24" r="1.5" fill="#666"/><circle cx="48.5" cy="24" r="1.5" fill="#666"/></svg><div style="position:absolute;left:834px;top:661.16px;font-size:25.5px;line-height:30px;color:#fff;font-weight:normal;white-space:nowrap;text-shadow:1px 1px 1px #222,-1px 0 1px #444,0 -1px 1px #444;">admin初学者</div>
</body></html>
